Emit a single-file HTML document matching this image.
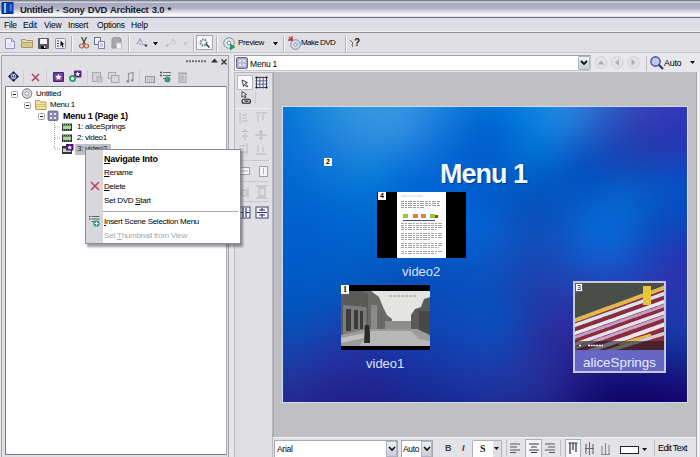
<!DOCTYPE html>
<html><head><meta charset="utf-8">
<style>
*{margin:0;padding:0;box-sizing:border-box}
html,body{width:700px;height:457px;overflow:hidden;background:#dedde0;font-family:"Liberation Sans",sans-serif;font-size:11px;color:#000;position:relative}
.a{position:absolute}
svg{display:block}
#title{left:0;top:0;width:700px;height:17px;background:linear-gradient(#70707e 0,#8a8a9a 1px,#e8e8f0 2px,#a8a8c0 3.5px,#b0b0c6 8px,#d4d4e0 11px,#f4f4fa 14px,#fafafc 16px,#c0c0c8 17px)}
#title .t{left:20px;top:4px;font-weight:bold;font-size:9.5px;letter-spacing:-0.3px;word-spacing:1px;color:#1c1c28;white-space:nowrap}
#menu{left:0;top:17px;width:700px;height:16px;background:#dddfe8;border-top:1px solid #6c6c7c;border-bottom:1px solid #909098;box-shadow:inset 0 -1px 0 #f4f4f8}
#menu span{position:absolute;top:2px;font-size:8.5px;letter-spacing:-0.2px;white-space:nowrap}
#tb{left:0;top:33px;width:700px;height:20px;background:#e0dfe4;border-bottom:1px solid #c4c4cc}
.tbt{font-size:8px;white-space:nowrap;color:#000}
.sep{position:absolute;width:2px;background:#b6b6b8;border-right:1px solid #f6f6f6}
#lp{left:0;top:53px;width:230px;height:404px;background:#e0dfe3;border-left:1px solid #a0a0a0;border-right:1px solid #a8a8ac}
#tree{left:5px;top:86px;width:222px;height:369px;background:#fff;border:1px solid #7a7a80;border-right-color:#a8a8b0}
#rp{left:234px;top:53px;width:466px;height:404px;background:#e0dfe3;border-left:1px solid #a8a8ac}
#canvas{left:272px;top:72px;width:425px;height:365px;background:#c0bfc3}
#blue{left:283px;top:107px;width:404px;height:295px;overflow:hidden;background:#1c38b8}
#pal{left:235px;top:72px;width:37px;height:385px;background:#e1e0e4;border-right:1px solid #c4c4c8}
#btb{left:272px;top:437px;width:428px;height:20px;background:#dfdee2}
.tt{font-size:8px;letter-spacing:-0.28px;white-space:nowrap;color:#000}
.cm{font-size:8px;letter-spacing:-0.27px;white-space:nowrap;color:#000}
.cm u{text-decoration:underline;text-underline-offset:0.5px;text-decoration-thickness:1px}
.vt{font-size:13px;color:#d8e6ff;white-space:nowrap;line-height:15px}
</style></head><body>
<div id="title" class="a">
  <svg class="a" style="left:1px;top:2px" width="13" height="12"><rect x="0.5" y="0" width="12" height="12" fill="#0a2c90"/><rect x="1" y="1" width="2" height="10" fill="#0838a8"/><rect x="3" y="1" width="2.2" height="10" fill="#88c8ff"/><rect x="6" y="1" width="6" height="10" fill="#0a3cb0"/><rect x="8.5" y="2" width="2.5" height="7" fill="#2a78e0"/></svg>
  <div class="a t">Untitled - Sony DVD Architect 3.0 *</div>
</div>
<div id="menu" class="a">
  <span style="left:4px">File</span><span style="left:23px">Edit</span><span style="left:44px">View</span><span style="left:68px">Insert</span><span style="left:97px">Options</span><span style="left:131px">Help</span>
</div>
<div id="tb" class="a">
  <!-- new -->
  <svg class="a" style="left:5px;top:5px" width="10" height="11"><path d="M0.5 0.5h6l3 3v7h-9z" fill="#eef0ff" stroke="#9090c8"/><path d="M6.5 0.5v3h3" fill="#c8c8f0" stroke="#9090c8"/><rect x="2" y="5" width="5" height="4" fill="#dde0fa"/></svg>
  <!-- open -->
  <svg class="a" style="left:21px;top:5px" width="12" height="10"><path d="M0.5 1.5h4l1 1h6v7h-11z" fill="#e4d8a8" stroke="#a89860"/><path d="M0.5 4.5h11" stroke="#b8a870"/><rect x="1" y="5" width="10" height="4" fill="#d8c890"/></svg>
  <!-- save -->
  <svg class="a" style="left:38px;top:5px" width="11" height="11"><rect x="0" y="0" width="11" height="11" rx="1" fill="#5c5c60"/><rect x="2" y="1" width="7" height="5" fill="#f4f4f4"/><rect x="3" y="8" width="5" height="3" fill="#101010"/><rect x="6" y="8" width="1.5" height="2" fill="#e8e8e8"/></svg>
  <!-- properties -->
  <svg class="a" style="left:55px;top:5px" width="11" height="11"><rect x="0.5" y="0.5" width="10" height="10" rx="1" fill="#eef0fa" stroke="#8c8cb8"/><path d="M2 3h2M2 5.5h2M2 8h2" stroke="#404060"/><path d="M5.5 2.5l4 4h-2l1 2.5-1 .5-1-2.5-1 1.5z" fill="#101018"/></svg>
  <div class="sep" style="left:71px;top:3px;height:16px"></div>
  <!-- cut -->
  <svg class="a" style="left:79px;top:4px" width="10" height="12"><path d="M2.5 0l3.5 7M7.5 0l-3.5 7" stroke="#404848" stroke-width="1.3"/><circle cx="2.5" cy="9" r="2" fill="none" stroke="#b06040" stroke-width="1.2"/><circle cx="7.5" cy="9" r="2" fill="none" stroke="#b06040" stroke-width="1.2"/></svg>
  <!-- copy -->
  <svg class="a" style="left:94px;top:4px" width="11" height="12"><rect x="0.5" y="0.5" width="6" height="7" fill="#f0f0f4" stroke="#707080"/><rect x="4.5" y="4.5" width="6" height="7" fill="#f4f4ff" stroke="#8080b0"/><path d="M6 7h3M6 9h3" stroke="#a0a0c0"/></svg>
  <!-- paste -->
  <svg class="a" style="left:111px;top:4px" width="11" height="12"><path d="M1 3q0-3 4.5-3t4.5 3v8h-9z" fill="#a8a8aa" stroke="#909092"/><rect x="5.5" y="6" width="5" height="6" fill="#f4f4f4" stroke="#c0c0c0"/></svg>
  <div class="sep" style="left:128px;top:3px;height:16px"></div>
  <!-- undo -->
  <svg class="a" style="left:136px;top:5px" width="12" height="9"><path d="M1 6l3-5 2 3M3 6h5l2 2" fill="none" stroke="#9a9ad8" stroke-width="1.2"/><circle cx="10" cy="7.5" r="1.3" fill="#505060"/></svg>
  <svg class="a" style="left:153px;top:9px" width="5" height="4"><path d="M0 0h5l-2.5 3.5z" fill="#101010"/></svg>
  <svg class="a" style="left:165px;top:5px" width="12" height="9"><path d="M11 6l-3-5-2 3M9 6h-5l-2 2" fill="none" stroke="#c8c8cc" stroke-width="1.2"/><circle cx="2" cy="7.5" r="1.3" fill="#c0c0c0"/></svg>
  <svg class="a" style="left:183px;top:9px" width="5" height="4"><path d="M0 0h5l-2.5 3.5z" fill="#c4c4c4"/></svg>
  <div class="sep" style="left:193px;top:3px;height:16px"></div>
  <div class="a" style="left:196px;top:2px;width:17px;height:15px;background:#f6f6f8;border:1px solid #a4a4b4"></div>
  <svg class="a" style="left:199px;top:5px" width="12" height="10"><circle cx="4.5" cy="4.5" r="3" fill="none" stroke="#5a8890" stroke-width="2" stroke-dasharray="1.5 1"/><path d="M7 6l3.5 3.5" stroke="#303838" stroke-width="1.5"/></svg>
  <div class="sep" style="left:216px;top:3px;height:16px"></div>
  <!-- preview -->
  <svg class="a" style="left:223px;top:4px" width="14" height="14"><circle cx="6" cy="6" r="5.3" fill="#dce4ee" stroke="#8090a8"/><circle cx="6" cy="6" r="1.8" fill="#fff" stroke="#8090a8"/><path d="M7 6.5v7l5.5-3.5z" fill="#289858"/></svg>
  <div class="a tbt" style="left:238px;top:5px;letter-spacing:-0.35px">Preview</div>
  <svg class="a" style="left:273px;top:9px" width="5" height="4"><path d="M0 0h5l-2.5 3.5z" fill="#101010"/></svg>
  <div class="sep" style="left:283px;top:3px;height:16px"></div>
  <!-- make dvd -->
  <svg class="a" style="left:288px;top:3px" width="13" height="14"><circle cx="7.5" cy="8.5" r="4.8" fill="#d8dce8" stroke="#7888a0"/><circle cx="7.5" cy="8.5" r="1.5" fill="#fff" stroke="#7888a0"/><path d="M1 1l3 3M0 4h5M4 0v5" stroke="#b83040" stroke-width="1.3"/></svg>
  <div class="a tbt" style="left:301px;top:5px;letter-spacing:-0.55px">Make DVD</div>
  <div class="sep" style="left:345px;top:3px;height:16px"></div>
  <svg class="a" style="left:349px;top:4px" width="12" height="12"><path d="M1 3l3 3-1 2 1 2" fill="none" stroke="#606068"/><text x="5" y="9" font-family="Liberation Sans" font-weight="bold" font-size="10" fill="#202028">?</text></svg>
</div>
<!-- left panel -->
<div class="a" style="left:0;top:53px;width:232px;height:404px;background:#e6e6ea"></div>
<div class="a" style="left:1px;top:55px;width:228px;height:402px;background:#e0dfe4;border:1px solid #a4a4a8;border-bottom:none"></div>
<svg class="a" style="left:186px;top:60px" width="20" height="3"><g fill="#505058"><circle cx="1" cy="1.2" r="1"/><circle cx="4" cy="1.2" r="1"/><circle cx="7" cy="1.2" r="1"/><circle cx="10" cy="1.2" r="1"/><circle cx="13" cy="1.2" r="1"/><circle cx="16" cy="1.2" r="1"/><circle cx="19" cy="1.2" r="1"/></g></svg>
<svg class="a" style="left:211px;top:58px" width="7" height="5"><path d="M0 4.5h7L3.5 0.5z" fill="#303038"/></svg>
<svg class="a" style="left:221px;top:59px" width="6" height="6"><path d="M0.5 0.5l5 5M5.5 0.5l-5 5" stroke="#303038" stroke-width="1.4"/></svg>
<!-- panel icons -->
<svg class="a" style="left:8px;top:71px" width="11" height="11"><path d="M5.5 0l2 2h-4zM5.5 11l2-2h-4zM0 5.5l2-2v4zM11 5.5l-2-2v4z" fill="#202850"/><circle cx="5.5" cy="5.5" r="3.8" fill="#303868"/><rect x="3.3" y="3.3" width="4.4" height="4.4" rx="1" fill="#d8e0f8"/><path d="M4.5 4v2.2h2V4" fill="none" stroke="#303868" stroke-width="0.8"/></svg>
<div class="sep" style="left:23px;top:70px;height:14px;width:1px;border:none;background:#cdcdd2"></div>
<svg class="a" style="left:31px;top:73px" width="9" height="9"><path d="M1 1l7 7M8 1l-7 7" stroke="#a85060" stroke-width="1.7"/></svg>
<div class="sep" style="left:46px;top:70px;height:14px;width:1px;border:none;background:#cdcdd2"></div>
<svg class="a" style="left:53px;top:72px" width="11" height="10"><rect x="0" y="0" width="11" height="10" rx="1" fill="#4a2070"/><rect x="1.2" y="1.2" width="8.6" height="7.6" fill="#7848a8"/><path d="M5.5 1.8l1 2.2 2.3.2-1.8 1.5.6 2.3-2.1-1.3-2.1 1.3.6-2.3-1.8-1.5 2.3-.2z" fill="#fff"/></svg>
<svg class="a" style="left:69px;top:70px" width="13" height="12"><rect x="5" y="0.5" width="7.5" height="7" rx="1" fill="#5a2880"/><path d="M8.7 1.6l.8 1.6 1.7.1-1.3 1.1.4 1.7-1.6-.9-1.6.9.4-1.7-1.3-1.1 1.7-.1z" fill="#fff"/><circle cx="3.5" cy="8.5" r="2.6" fill="none" stroke="#2a9a70" stroke-width="1.8"/></svg>
<div class="sep" style="left:87px;top:70px;height:14px;width:1px;border:none;background:#cdcdd2"></div>
<svg class="a" style="left:92px;top:72px" width="11" height="11"><rect x="0.5" y="0.5" width="8" height="9" fill="#d4d4d8" stroke="#a8a8ac"/><path d="M5 5h5v5h-5z" fill="#c8c8cc" stroke="#b0b0b4"/></svg>
<svg class="a" style="left:108px;top:72px" width="12" height="11"><rect x="0.5" y="0.5" width="7" height="6" fill="#dcdce0" stroke="#a8a8ac"/><rect x="3.5" y="3.5" width="7.5" height="7" fill="#d8d8dc" stroke="#a8a8ac"/></svg>
<svg class="a" style="left:126px;top:72px" width="8" height="11"><path d="M2.5 9V1.5l4.5-1v7" fill="none" stroke="#98989c" stroke-width="1.2"/><circle cx="1.8" cy="9.2" r="1.5" fill="#98989c"/><circle cx="6.2" cy="8.2" r="1.5" fill="#98989c"/></svg>
<div class="sep" style="left:139px;top:70px;height:14px;width:1px;border:none;background:#cdcdd2"></div>
<svg class="a" style="left:145px;top:74px" width="10" height="9"><rect x="0.5" y="2.5" width="9" height="6" fill="#c4c4c8" stroke="#98989c"/><path d="M1 4h8M1 7h8" stroke="#e8e8ea" stroke-dasharray="1 1"/></svg>
<svg class="a" style="left:160px;top:71px" width="12" height="12"><path d="M3 1.5h8M3 4.5h8M3 7.5h3" stroke="#707078" stroke-width="1.2"/><circle cx="1" cy="1.5" r="1" fill="#505058"/><circle cx="1" cy="4.5" r="1" fill="#505058"/><circle cx="7.5" cy="8.5" r="3" fill="#3a9880"/></svg>
<svg class="a" style="left:178px;top:72px" width="9" height="11"><path d="M1 1.5h7v9h-7z" fill="#d0d0d4" stroke="#a8a8ac"/><path d="M3 3v6M5 3v6" stroke="#a8a8ac"/><path d="M0 1h9" stroke="#a0a0a4"/></svg>
<!-- tree -->
<div id="tree" class="a"></div>
<!-- tree content -->
<svg class="a" style="left:5px;top:86px" width="222" height="70">
  <g stroke="#a8a8a8" stroke-dasharray="1 1" fill="none">
    <path d="M49.5 35v28M50 41h6M50 52h6M50 63h6"/>
  </g>
  <g fill="#fafafa" stroke="#a0a0a8"><rect x="6.5" y="5.5" width="6" height="6" rx="1"/><rect x="19.5" y="16.5" width="6" height="6" rx="1"/><rect x="33.5" y="27.5" width="6" height="6" rx="1"/></g>
  <path d="M8 8.5h3M21 19.5h3M35 30.5h3" stroke="#202020"/>
  <!-- disc -->
  <circle cx="22" cy="7.5" r="4.8" fill="#d8d8e0" stroke="#7c7c88"/><circle cx="22" cy="7.5" r="1.8" fill="#fff" stroke="#8c8c98" stroke-width="0.8"/>
  <!-- folder -->
  <path d="M30.5 14.5h4l1 1.5h5.5v7.5h-10.5z" fill="#f0e4a0" stroke="#b0a050"/><path d="M31 18.5h10M31 20.5h10" stroke="#c8b868" stroke-width="0.8"/>
  <!-- menu icon -->
  <rect x="43" y="25" width="10" height="9.5" rx="1.2" fill="#8a88b0" stroke="#606078" stroke-width="0.8"/><g fill="#e4e4f4"><rect x="45" y="27" width="2" height="2"/><rect x="49" y="27" width="2" height="2"/><rect x="45" y="31" width="2" height="2"/><rect x="49" y="31" width="2" height="2"/></g>
  <!-- films -->
  <g><rect x="57" y="37.5" width="10" height="7.5" fill="#2c3c2c"/><rect x="58" y="39.5" width="8" height="3.5" fill="#a8d8a0"/><path d="M58 38.3h8M58 44.2h8" stroke="#d0e8d0" stroke-width="0.7" stroke-dasharray="1 1"/></g>
  <g transform="translate(0,11)"><rect x="57" y="37.5" width="10" height="7.5" fill="#2c3c2c"/><rect x="58" y="39.5" width="8" height="3.5" fill="#a8d8a0"/><path d="M58 38.3h8M58 44.2h8" stroke="#d0e8d0" stroke-width="0.7" stroke-dasharray="1 1"/></g>
  <g transform="translate(0,23)"><rect x="57" y="37" width="10" height="8" fill="#2c3c2c"/><rect x="58" y="39.5" width="8" height="3.5" fill="#c8d8c0"/></g>
  <rect x="61" y="58" width="7.5" height="6.5" fill="#4a1870"/><path d="M64.7 59.2l.8 1.5 1.6.1-1.2 1 .4 1.6-1.6-.9-1.6.9.4-1.6-1.2-1 1.6-.1z" fill="#fff"/>
</svg>
<div class="a tt" style="left:36px;top:89px">Untitled</div>
<div class="a tt" style="left:50px;top:100px">Menu 1</div>
<div class="a tt" style="left:63px;top:111px;font-weight:bold;font-size:9px;letter-spacing:-0.26px">Menu 1 (Page 1)</div>
<div class="a tt" style="left:77px;top:122px">1: aliceSprings</div>
<div class="a tt" style="left:77px;top:133px">2: video1</div>
<div class="a" style="left:75px;top:144px;width:36px;height:11px;background:#c0c0c4"></div>
<div class="a tt" style="left:77px;top:144px;color:#202020">3: video2</div>
<!-- right panel -->
<div class="a" style="left:232px;top:53px;width:468px;height:404px;background:#e8e8ec"></div>
<!-- combobox -->
<div class="a" style="left:234px;top:55px;width:357px;height:16px;background:#fff;border:1px solid #7f9db9;border-color:#a0a0a8 #c8c8cc #c8c8cc #a0a0a8"></div>
<svg class="a" style="left:236px;top:57px" width="12" height="12"><rect x="0.5" y="0.5" width="11" height="11" rx="1.5" fill="#a8a8c8" stroke="#68688a"/><rect x="2" y="2" width="8" height="8" fill="#bcbcd8"/><g fill="#e8e8f8"><rect x="3" y="3" width="2" height="2"/><rect x="7" y="3" width="2" height="2"/><rect x="3" y="7" width="2" height="2"/><rect x="7" y="7" width="2" height="2"/></g></svg>
<div class="a tt" style="left:250px;top:59px;font-size:8.5px;letter-spacing:-0.2px">Menu 1</div>
<div class="a" style="left:578px;top:56px;width:12px;height:14px;background:linear-gradient(#eef0f6,#c8ccd8);border:1px solid #b0b4c4;border-radius:1px"></div>
<svg class="a" style="left:580px;top:60px" width="8" height="6"><path d="M1 1l3 3 3-3" fill="none" stroke="#101010" stroke-width="1.8"/></svg>
<!-- nav buttons -->
<svg class="a" style="left:594px;top:56px" width="46" height="14"><g fill="#e4e4e8" stroke="#d0d0d4"><circle cx="7" cy="6.5" r="5.8"/><circle cx="23" cy="6.5" r="5.8"/><circle cx="39.5" cy="6.5" r="5.8"/></g><g fill="#b0b0b4"><path d="M3.5 8.5h7l-3.5-4z"/><path d="M25 3v7l-4-3.5z"/><path d="M37.5 3v7l4-3.5z"/></g></svg>
<div class="a" style="left:646px;top:56px;width:1px;height:15px;background:#c0c0c4"></div>
<svg class="a" style="left:650px;top:56px" width="14" height="14"><circle cx="5.5" cy="5.5" r="4.6" fill="#c0c8f0" stroke="#5860a0" stroke-width="1.6"/><path d="M8.8 8.8l4.2 4.2" stroke="#30386a" stroke-width="2.2"/></svg>
<div class="a tt" style="left:664px;top:58px;font-size:9px;letter-spacing:-0.3px">Auto</div>
<svg class="a" style="left:690px;top:61px" width="5" height="4"><path d="M0 0h5l-2.5 3z" fill="#101010"/></svg>
<!-- palette -->
<div class="a" style="left:234px;top:72px;width:39px;height:385px;background:#e0dfe4;border:1px solid #b8b8bc;border-bottom:none"></div>
<div class="a" style="left:237px;top:75px;width:16px;height:15px;background:#fafafa;border:1px solid #b8b8bc"></div>
<svg class="a" style="left:241px;top:79px" width="9" height="9"><path d="M1 1l5.5 2.6-2.3.7 2.6 2.9-.9.9-2.6-2.9-.8 2.2z" fill="#f0f0f8" stroke="#202028" stroke-width="0.8"/></svg>
<svg class="a" style="left:255px;top:76px" width="13" height="13"><rect x="1.5" y="1.5" width="10" height="10" fill="#eeeef6" stroke="#303050" stroke-width="0.9"/><path d="M0.5 4.8h12M0.5 8.2h12M4.8 0.5v12M8.2 0.5v12" stroke="#484870" stroke-width="0.8"/><g fill="#101018"><circle cx="1.5" cy="1.5" r="1.1"/><circle cx="11.5" cy="1.5" r="1.1"/><circle cx="1.5" cy="11.5" r="1.1"/><circle cx="11.5" cy="11.5" r="1.1"/></g></svg>
<svg class="a" style="left:240px;top:91px" width="12" height="13"><path d="M2 0.5l4.5 3-2 .6 1.6 2.2-1 .7-1.6-2.2-1.5 1.5z" fill="#f4f4fa" stroke="#202028" stroke-width="0.8"/><path d="M4 8.2h4.5a2 2 0 0 1 0 4h-4.5a2 2 0 0 1 0-4z" fill="none" stroke="#202028" stroke-width="1.1"/><path d="M4.5 10.2h4" stroke="#202028" stroke-width="1.2"/></svg>
<div class="a" style="left:255px;top:92px;width:1px;height:12px;background:#cacace"></div>
<div class="a" style="left:236px;top:108px;width:33px;height:1px;background:#c4c4c8;border-bottom:1px solid #f4f4f6"></div>
<svg class="a" style="left:238px;top:112px" width="32" height="108">
  <g fill="none" stroke="#b8b8bc" stroke-width="1">
    <!-- row1 -->
    <path d="M2 1v11M4 3h5M4 6h4M4 9h6"/><path d="M18 1h11M20 3v7M25 3v5"/>
    <path d="M7 17v2M4 19.5h6M7 21v2M4 24h6M7 25v3"/><path d="M17 23h12M23 18v10M21 20h4M21 26h4"/>
    <path d="M9 31v11M1 34h6M1 37h5M1 40h7"/><path d="M18 42h11M20 33v7M25 35v5"/>
  </g>
  <path d="M0 48.5h31" stroke="#c8c8cc"/>
  <g fill="#f6f6f8" stroke="#a0a0a4"><rect x="1.5" y="55.5" width="10" height="7"/><rect x="21.5" y="54.5" width="8" height="10"/></g>
  <path d="M3 59h7M25.5 56v6" stroke="#b0b0b4"/>
  <path d="M0 69.5h31" stroke="#c8c8cc"/>
  <g fill="none" stroke="#b4b4b8"><path d="M1 76v10M10 76v10M4 78h4v6h-4z"/><path d="M18 74h11M18 86h11M21 76v8h6v-8z"/></g>
  <path d="M0 89.5h31" stroke="#c8c8cc"/>
  <g fill="#f8f8fc" stroke="#40406a"><rect x="1" y="95" width="11" height="11"/><rect x="18" y="95" width="12" height="11"/></g>
  <g stroke="#303080" stroke-width="1.2"><path d="M5 96v9M8 96v9M2 100.5h2.5M8.5 100.5h3"/><path d="M19 100.5h10M24 96v3M24 102v3M21 98h6M21 103h6"/></g>
</svg>
<!-- canvas -->
<div class="a" style="left:273px;top:72px;width:423px;height:365px;background:#c0bfc4;border-left:1px solid #a8a8ac"></div>
<div class="a" style="left:696px;top:72px;width:4px;height:385px;background:#f2f2f4;border-left:1px solid #a4a4a8"></div>

<!-- bottom toolbar -->
<div class="a" style="left:273px;top:437px;width:423px;height:20px;background:#e4e3e8;border-top:1px solid #f0f0f2"></div>
<div class="a" style="left:274px;top:440px;width:124px;height:17px;background:#fff;border:1px solid #a8a8b0;border-bottom:none"></div>
<div class="a tt" style="left:277px;top:444px;font-size:8.5px;letter-spacing:-0.3px">Arial</div>
<div class="a" style="left:386px;top:441px;width:11px;height:16px;background:linear-gradient(#eef0f6,#c8ccd8);border:1px solid #b0b4c4"></div>
<svg class="a" style="left:388px;top:446px" width="8" height="6"><path d="M1 1l3 3 3-3" fill="none" stroke="#101010" stroke-width="1.6"/></svg>
<div class="a" style="left:401px;top:440px;width:32px;height:17px;background:#fff;border:1px solid #a8a8b0;border-bottom:none"></div>
<div class="a tt" style="left:403px;top:444px;font-size:8.5px;letter-spacing:-0.35px">Auto</div>
<div class="a" style="left:421px;top:441px;width:11px;height:16px;background:linear-gradient(#eef0f6,#c8ccd8);border:1px solid #b0b4c4"></div>
<svg class="a" style="left:423px;top:446px" width="8" height="6"><path d="M1 1l3 3 3-3" fill="none" stroke="#101010" stroke-width="1.6"/></svg>
<div class="a" style="left:445px;top:443px;font-weight:bold;font-size:9px;color:#404048">B</div>
<div class="a" style="left:462px;top:443px;font-style:italic;font-weight:bold;font-size:9px;color:#404048">I</div>
<div class="a" style="left:472px;top:440px;width:30px;height:17px;background:#fff;border:1px solid #b0b0b8;border-bottom:none;border-radius:2px 2px 0 0"></div>
<div class="a" style="left:480px;top:443px;font-weight:bold;font-size:10px;color:#202028;font-family:'Liberation Serif',serif">S</div>
<div class="a" style="left:493px;top:441px;width:8px;height:16px;background:#e0e0e0"></div>
<svg class="a" style="left:494px;top:447px" width="5" height="3"><path d="M0 0h5l-2.5 3z" fill="#101010"/></svg>
<div class="a" style="left:506px;top:440px;width:1px;height:16px;background:#c0c0c4"></div>
<svg class="a" style="left:510px;top:443px" width="12" height="10"><path d="M0 1h10M0 4h7M0 7h10M0 9.5h6" stroke="#585860" stroke-width="1.1"/></svg>
<div class="a" style="left:525px;top:439px;width:17px;height:18px;background:#f6f6f8;border:1px solid #a8b0c0;border-bottom:none"></div>
<svg class="a" style="left:529px;top:443px" width="11" height="10"><path d="M0 1h10M2 4h6M0 7h10M2 9.5h6" stroke="#303848" stroke-width="1.1"/></svg>
<svg class="a" style="left:544px;top:443px" width="12" height="10"><path d="M1 1h10M4 4h7M1 7h10M5 9.5h6" stroke="#585860" stroke-width="1.1"/></svg>
<div class="a" style="left:560px;top:440px;width:1px;height:16px;background:#c0c0c4"></div>
<div class="a" style="left:565px;top:439px;width:16px;height:18px;background:#f6f6f8;border:1px solid #a8b0c0;border-bottom:none"></div>
<svg class="a" style="left:568px;top:442px" width="10" height="13"><path d="M0.5 1h9M2 1v11M5 1v7M8 1v9" stroke="#283050" stroke-width="1.2"/></svg>
<svg class="a" style="left:585px;top:442px" width="9" height="13"><path d="M1 2v10M4.5 0v13M8 2v10M0 6.5h9" stroke="#686870" stroke-width="1.1"/></svg>
<svg class="a" style="left:601px;top:442px" width="9" height="13"><path d="M1 4v8M4.5 1v11M8 3v9M0 12.5h9" stroke="#888890" stroke-width="1.1"/></svg>
<div class="a" style="left:620px;top:446px;width:19px;height:8px;background:#fff;border:1px solid #202028"></div>
<svg class="a" style="left:642px;top:448px" width="5" height="3"><path d="M0 0h5l-2.5 3z" fill="#101010"/></svg>
<div class="a" style="left:654px;top:440px;width:1px;height:16px;background:#c0c0c4"></div>
<div class="a tt" style="left:658px;top:443px;font-size:9px;letter-spacing:-0.6px">Edit Text</div>
<div class="a" style="left:282px;top:106px;width:406px;height:297px;border:1px solid #d4dcf4"></div>
<div class="a" style="left:283px;top:107px;width:404px;height:295px;overflow:hidden;background:#0860d0">
<svg class="a" style="left:-12px;top:-12px;filter:blur(6.6000000000000005px)" width="428" height="319" viewBox="-12 -12 428 319"><rect x="-12" y="-12" width="12" height="12" fill="#0679d9"/><rect x="0" y="-12" width="12" height="12" fill="#0a7cd9"/><rect x="12" y="-12" width="12" height="12" fill="#1081da"/><rect x="24" y="-12" width="12" height="12" fill="#1786db"/><rect x="36" y="-12" width="12" height="12" fill="#1e8cdd"/><rect x="48" y="-12" width="12" height="12" fill="#2691de"/><rect x="60" y="-12" width="12" height="12" fill="#2c95e0"/><rect x="72" y="-12" width="12" height="12" fill="#3298e1"/><rect x="84" y="-12" width="12" height="12" fill="#3599e2"/><rect x="96" y="-12" width="12" height="12" fill="#3799e3"/><rect x="108" y="-12" width="12" height="12" fill="#3697e3"/><rect x="120" y="-12" width="12" height="12" fill="#3293e3"/><rect x="132" y="-12" width="12" height="12" fill="#2c8ee2"/><rect x="144" y="-12" width="12" height="12" fill="#2488e0"/><rect x="156" y="-12" width="12" height="12" fill="#1c83dd"/><rect x="168" y="-12" width="12" height="12" fill="#147edb"/><rect x="180" y="-12" width="12" height="12" fill="#0d79d9"/><rect x="192" y="-12" width="12" height="12" fill="#0976d9"/><rect x="204" y="-12" width="12" height="12" fill="#0676da"/><rect x="216" y="-12" width="12" height="12" fill="#0678dc"/><rect x="228" y="-12" width="12" height="12" fill="#0a7dde"/><rect x="240" y="-12" width="12" height="12" fill="#1082e0"/><rect x="252" y="-12" width="12" height="12" fill="#1885e2"/><rect x="264" y="-12" width="12" height="12" fill="#1f87e1"/><rect x="276" y="-12" width="12" height="12" fill="#2684df"/><rect x="288" y="-12" width="12" height="12" fill="#2b7dda"/><rect x="300" y="-12" width="12" height="12" fill="#2e73d4"/><rect x="312" y="-12" width="12" height="12" fill="#3168cd"/><rect x="324" y="-12" width="12" height="12" fill="#335dc6"/><rect x="336" y="-12" width="12" height="12" fill="#3453c1"/><rect x="348" y="-12" width="12" height="12" fill="#354bbd"/><rect x="360" y="-12" width="12" height="12" fill="#3644bb"/><rect x="372" y="-12" width="12" height="12" fill="#363fba"/><rect x="384" y="-12" width="12" height="12" fill="#353cbb"/><rect x="396" y="-12" width="12" height="12" fill="#333abd"/><rect x="408" y="-12" width="12" height="12" fill="#3239bf"/><rect x="-12" y="0" width="12" height="12" fill="#0475d8"/><rect x="0" y="0" width="12" height="12" fill="#0878d8"/><rect x="12" y="0" width="12" height="12" fill="#0e7cd8"/><rect x="24" y="0" width="12" height="12" fill="#1583da"/><rect x="36" y="0" width="12" height="12" fill="#1d89db"/><rect x="48" y="0" width="12" height="12" fill="#248edd"/><rect x="60" y="0" width="12" height="12" fill="#2b92df"/><rect x="72" y="0" width="12" height="12" fill="#3095e0"/><rect x="84" y="0" width="12" height="12" fill="#3496e1"/><rect x="96" y="0" width="12" height="12" fill="#3697e2"/><rect x="108" y="0" width="12" height="12" fill="#3594e2"/><rect x="120" y="0" width="12" height="12" fill="#3090e1"/><rect x="132" y="0" width="12" height="12" fill="#2989e0"/><rect x="144" y="0" width="12" height="12" fill="#2183de"/><rect x="156" y="0" width="12" height="12" fill="#177dda"/><rect x="168" y="0" width="12" height="12" fill="#0f78d7"/><rect x="180" y="0" width="12" height="12" fill="#0872d5"/><rect x="192" y="0" width="12" height="12" fill="#046ed5"/><rect x="204" y="0" width="12" height="12" fill="#016ed6"/><rect x="216" y="0" width="12" height="12" fill="#0171d9"/><rect x="228" y="0" width="12" height="12" fill="#0578dc"/><rect x="240" y="0" width="12" height="12" fill="#0b7ede"/><rect x="252" y="0" width="12" height="12" fill="#1382e0"/><rect x="264" y="0" width="12" height="12" fill="#1b84e0"/><rect x="276" y="0" width="12" height="12" fill="#2282dd"/><rect x="288" y="0" width="12" height="12" fill="#277ad7"/><rect x="300" y="0" width="12" height="12" fill="#2a6ed0"/><rect x="312" y="0" width="12" height="12" fill="#2c62c8"/><rect x="324" y="0" width="12" height="12" fill="#2e57c1"/><rect x="336" y="0" width="12" height="12" fill="#304dbc"/><rect x="348" y="0" width="12" height="12" fill="#3245b8"/><rect x="360" y="0" width="12" height="12" fill="#323fb6"/><rect x="372" y="0" width="12" height="12" fill="#323bb6"/><rect x="384" y="0" width="12" height="12" fill="#3139b7"/><rect x="396" y="0" width="12" height="12" fill="#2f38ba"/><rect x="408" y="0" width="12" height="12" fill="#2e37bd"/><rect x="-12" y="12" width="12" height="12" fill="#0272d7"/><rect x="0" y="12" width="12" height="12" fill="#0775d7"/><rect x="12" y="12" width="12" height="12" fill="#0c79d8"/><rect x="24" y="12" width="12" height="12" fill="#147fd9"/><rect x="36" y="12" width="12" height="12" fill="#1b85db"/><rect x="48" y="12" width="12" height="12" fill="#228adc"/><rect x="60" y="12" width="12" height="12" fill="#298dde"/><rect x="72" y="12" width="12" height="12" fill="#2d90df"/><rect x="84" y="12" width="12" height="12" fill="#3092e0"/><rect x="96" y="12" width="12" height="12" fill="#3293e0"/><rect x="108" y="12" width="12" height="12" fill="#3191e0"/><rect x="120" y="12" width="12" height="12" fill="#2c8be0"/><rect x="132" y="12" width="12" height="12" fill="#2584de"/><rect x="144" y="12" width="12" height="12" fill="#1c7edb"/><rect x="156" y="12" width="12" height="12" fill="#1377d8"/><rect x="168" y="12" width="12" height="12" fill="#0a71d4"/><rect x="180" y="12" width="12" height="12" fill="#046bd2"/><rect x="192" y="12" width="12" height="12" fill="#0166d1"/><rect x="204" y="12" width="12" height="12" fill="#0067d3"/><rect x="216" y="12" width="12" height="12" fill="#006cd6"/><rect x="228" y="12" width="12" height="12" fill="#0173d9"/><rect x="240" y="12" width="12" height="12" fill="#067adc"/><rect x="252" y="12" width="12" height="12" fill="#0e7edd"/><rect x="264" y="12" width="12" height="12" fill="#167fdc"/><rect x="276" y="12" width="12" height="12" fill="#1d7cd9"/><rect x="288" y="12" width="12" height="12" fill="#2173d3"/><rect x="300" y="12" width="12" height="12" fill="#2367cb"/><rect x="312" y="12" width="12" height="12" fill="#265bc4"/><rect x="324" y="12" width="12" height="12" fill="#2851bd"/><rect x="336" y="12" width="12" height="12" fill="#2a48b7"/><rect x="348" y="12" width="12" height="12" fill="#2d41b3"/><rect x="360" y="12" width="12" height="12" fill="#2e3bb1"/><rect x="372" y="12" width="12" height="12" fill="#2f38b2"/><rect x="384" y="12" width="12" height="12" fill="#2d36b4"/><rect x="396" y="12" width="12" height="12" fill="#2b36b8"/><rect x="408" y="12" width="12" height="12" fill="#2a37bb"/><rect x="-12" y="24" width="12" height="12" fill="#0270d7"/><rect x="0" y="24" width="12" height="12" fill="#0672d8"/><rect x="12" y="24" width="12" height="12" fill="#0c76d8"/><rect x="24" y="24" width="12" height="12" fill="#127bd9"/><rect x="36" y="24" width="12" height="12" fill="#1a80da"/><rect x="48" y="24" width="12" height="12" fill="#2084dc"/><rect x="60" y="24" width="12" height="12" fill="#2587dd"/><rect x="72" y="24" width="12" height="12" fill="#288bdd"/><rect x="84" y="24" width="12" height="12" fill="#2a8dde"/><rect x="96" y="24" width="12" height="12" fill="#2b8dde"/><rect x="108" y="24" width="12" height="12" fill="#2a8bde"/><rect x="120" y="24" width="12" height="12" fill="#2585dd"/><rect x="132" y="24" width="12" height="12" fill="#1e7edc"/><rect x="144" y="24" width="12" height="12" fill="#1678d9"/><rect x="156" y="24" width="12" height="12" fill="#0e71d6"/><rect x="168" y="24" width="12" height="12" fill="#086bd3"/><rect x="180" y="24" width="12" height="12" fill="#0365d0"/><rect x="192" y="24" width="12" height="12" fill="#0061cf"/><rect x="204" y="24" width="12" height="12" fill="#0062d0"/><rect x="216" y="24" width="12" height="12" fill="#0068d3"/><rect x="228" y="24" width="12" height="12" fill="#006fd6"/><rect x="240" y="24" width="12" height="12" fill="#0275d9"/><rect x="252" y="24" width="12" height="12" fill="#0878d9"/><rect x="264" y="24" width="12" height="12" fill="#0f77d7"/><rect x="276" y="24" width="12" height="12" fill="#1572d3"/><rect x="288" y="24" width="12" height="12" fill="#1969cd"/><rect x="300" y="24" width="12" height="12" fill="#1c5ec6"/><rect x="312" y="24" width="12" height="12" fill="#1e54bf"/><rect x="324" y="24" width="12" height="12" fill="#214bb9"/><rect x="336" y="24" width="12" height="12" fill="#2443b4"/><rect x="348" y="24" width="12" height="12" fill="#273eb0"/><rect x="360" y="24" width="12" height="12" fill="#293aaf"/><rect x="372" y="24" width="12" height="12" fill="#2b37af"/><rect x="384" y="24" width="12" height="12" fill="#2936b2"/><rect x="396" y="24" width="12" height="12" fill="#2637b7"/><rect x="408" y="24" width="12" height="12" fill="#2438bb"/><rect x="-12" y="36" width="12" height="12" fill="#026ed7"/><rect x="0" y="36" width="12" height="12" fill="#0670d8"/><rect x="12" y="36" width="12" height="12" fill="#0b73d8"/><rect x="24" y="36" width="12" height="12" fill="#1177d9"/><rect x="36" y="36" width="12" height="12" fill="#177ada"/><rect x="48" y="36" width="12" height="12" fill="#1c7ddb"/><rect x="60" y="36" width="12" height="12" fill="#1f81db"/><rect x="72" y="36" width="12" height="12" fill="#2086db"/><rect x="84" y="36" width="12" height="12" fill="#2087dc"/><rect x="96" y="36" width="12" height="12" fill="#2086dc"/><rect x="108" y="36" width="12" height="12" fill="#1e82dc"/><rect x="120" y="36" width="12" height="12" fill="#1a7ddb"/><rect x="132" y="36" width="12" height="12" fill="#1577da"/><rect x="144" y="36" width="12" height="12" fill="#1072d7"/><rect x="156" y="36" width="12" height="12" fill="#0a6cd5"/><rect x="168" y="36" width="12" height="12" fill="#0566d2"/><rect x="180" y="36" width="12" height="12" fill="#0162cf"/><rect x="192" y="36" width="12" height="12" fill="#005fce"/><rect x="204" y="36" width="12" height="12" fill="#0060cf"/><rect x="216" y="36" width="12" height="12" fill="#0065d1"/><rect x="228" y="36" width="12" height="12" fill="#006bd3"/><rect x="240" y="36" width="12" height="12" fill="#0071d5"/><rect x="252" y="36" width="12" height="12" fill="#0372d4"/><rect x="264" y="36" width="12" height="12" fill="#096ed2"/><rect x="276" y="36" width="12" height="12" fill="#0d67cd"/><rect x="288" y="36" width="12" height="12" fill="#105ec7"/><rect x="300" y="36" width="12" height="12" fill="#1456c2"/><rect x="312" y="36" width="12" height="12" fill="#174ebc"/><rect x="324" y="36" width="12" height="12" fill="#1a48b7"/><rect x="336" y="36" width="12" height="12" fill="#1d42b3"/><rect x="348" y="36" width="12" height="12" fill="#1f3fb1"/><rect x="360" y="36" width="12" height="12" fill="#223cb0"/><rect x="372" y="36" width="12" height="12" fill="#233ab1"/><rect x="384" y="36" width="12" height="12" fill="#223ab5"/><rect x="396" y="36" width="12" height="12" fill="#203bb9"/><rect x="408" y="36" width="12" height="12" fill="#1e3bbd"/><rect x="-12" y="48" width="12" height="12" fill="#016cd6"/><rect x="0" y="48" width="12" height="12" fill="#056ed6"/><rect x="12" y="48" width="12" height="12" fill="#0970d7"/><rect x="24" y="48" width="12" height="12" fill="#0e73d7"/><rect x="36" y="48" width="12" height="12" fill="#1276d8"/><rect x="48" y="48" width="12" height="12" fill="#1579d9"/><rect x="60" y="48" width="12" height="12" fill="#167ed9"/><rect x="72" y="48" width="12" height="12" fill="#1682d9"/><rect x="84" y="48" width="12" height="12" fill="#1582d9"/><rect x="96" y="48" width="12" height="12" fill="#147fda"/><rect x="108" y="48" width="12" height="12" fill="#127ada"/><rect x="120" y="48" width="12" height="12" fill="#1075d9"/><rect x="132" y="48" width="12" height="12" fill="#0d70d8"/><rect x="144" y="48" width="12" height="12" fill="#096cd6"/><rect x="156" y="48" width="12" height="12" fill="#0668d4"/><rect x="168" y="48" width="12" height="12" fill="#0263d2"/><rect x="180" y="48" width="12" height="12" fill="#0060cf"/><rect x="192" y="48" width="12" height="12" fill="#005ece"/><rect x="204" y="48" width="12" height="12" fill="#005fce"/><rect x="216" y="48" width="12" height="12" fill="#0062ce"/><rect x="228" y="48" width="12" height="12" fill="#0066cf"/><rect x="240" y="48" width="12" height="12" fill="#0069cf"/><rect x="252" y="48" width="12" height="12" fill="#0169ce"/><rect x="264" y="48" width="12" height="12" fill="#0465cc"/><rect x="276" y="48" width="12" height="12" fill="#075ec8"/><rect x="288" y="48" width="12" height="12" fill="#0a55c3"/><rect x="300" y="48" width="12" height="12" fill="#0c50bf"/><rect x="312" y="48" width="12" height="12" fill="#0f4cbb"/><rect x="324" y="48" width="12" height="12" fill="#1249b8"/><rect x="336" y="48" width="12" height="12" fill="#1547b6"/><rect x="348" y="48" width="12" height="12" fill="#1745b5"/><rect x="360" y="48" width="12" height="12" fill="#1943b5"/><rect x="372" y="48" width="12" height="12" fill="#1942b7"/><rect x="384" y="48" width="12" height="12" fill="#1842bb"/><rect x="396" y="48" width="12" height="12" fill="#1741be"/><rect x="408" y="48" width="12" height="12" fill="#1740c1"/><rect x="-12" y="60" width="12" height="12" fill="#0069d4"/><rect x="0" y="60" width="12" height="12" fill="#036bd4"/><rect x="12" y="60" width="12" height="12" fill="#066dd5"/><rect x="24" y="60" width="12" height="12" fill="#0a70d5"/><rect x="36" y="60" width="12" height="12" fill="#0d73d6"/><rect x="48" y="60" width="12" height="12" fill="#0e76d7"/><rect x="60" y="60" width="12" height="12" fill="#0e7ad7"/><rect x="72" y="60" width="12" height="12" fill="#0c7dd7"/><rect x="84" y="60" width="12" height="12" fill="#0b7cd7"/><rect x="96" y="60" width="12" height="12" fill="#0a78d7"/><rect x="108" y="60" width="12" height="12" fill="#0972d8"/><rect x="120" y="60" width="12" height="12" fill="#076ed7"/><rect x="132" y="60" width="12" height="12" fill="#066ad6"/><rect x="144" y="60" width="12" height="12" fill="#0467d5"/><rect x="156" y="60" width="12" height="12" fill="#0264d3"/><rect x="168" y="60" width="12" height="12" fill="#0162d2"/><rect x="180" y="60" width="12" height="12" fill="#005fd0"/><rect x="192" y="60" width="12" height="12" fill="#005ece"/><rect x="204" y="60" width="12" height="12" fill="#005ecc"/><rect x="216" y="60" width="12" height="12" fill="#005fcb"/><rect x="228" y="60" width="12" height="12" fill="#0060ca"/><rect x="240" y="60" width="12" height="12" fill="#0061c9"/><rect x="252" y="60" width="12" height="12" fill="#0160c8"/><rect x="264" y="60" width="12" height="12" fill="#025dc6"/><rect x="276" y="60" width="12" height="12" fill="#0457c4"/><rect x="288" y="60" width="12" height="12" fill="#0552c1"/><rect x="300" y="60" width="12" height="12" fill="#074fbf"/><rect x="312" y="60" width="12" height="12" fill="#0a4fbe"/><rect x="324" y="60" width="12" height="12" fill="#0c50bd"/><rect x="336" y="60" width="12" height="12" fill="#0f4fbc"/><rect x="348" y="60" width="12" height="12" fill="#104ebb"/><rect x="360" y="60" width="12" height="12" fill="#104cbc"/><rect x="372" y="60" width="12" height="12" fill="#104bbe"/><rect x="384" y="60" width="12" height="12" fill="#0f4ac2"/><rect x="396" y="60" width="12" height="12" fill="#0f48c4"/><rect x="408" y="60" width="12" height="12" fill="#1045c4"/><rect x="-12" y="72" width="12" height="12" fill="#0067d1"/><rect x="0" y="72" width="12" height="12" fill="#0168d2"/><rect x="12" y="72" width="12" height="12" fill="#036ad2"/><rect x="24" y="72" width="12" height="12" fill="#066cd3"/><rect x="36" y="72" width="12" height="12" fill="#086fd4"/><rect x="48" y="72" width="12" height="12" fill="#0972d5"/><rect x="60" y="72" width="12" height="12" fill="#0875d5"/><rect x="72" y="72" width="12" height="12" fill="#0676d5"/><rect x="84" y="72" width="12" height="12" fill="#0575d5"/><rect x="96" y="72" width="12" height="12" fill="#0472d5"/><rect x="108" y="72" width="12" height="12" fill="#026dd6"/><rect x="120" y="72" width="12" height="12" fill="#0169d6"/><rect x="132" y="72" width="12" height="12" fill="#0167d5"/><rect x="144" y="72" width="12" height="12" fill="#0164d4"/><rect x="156" y="72" width="12" height="12" fill="#0062d3"/><rect x="168" y="72" width="12" height="12" fill="#0061d2"/><rect x="180" y="72" width="12" height="12" fill="#005fd0"/><rect x="192" y="72" width="12" height="12" fill="#005ece"/><rect x="204" y="72" width="12" height="12" fill="#005ccb"/><rect x="216" y="72" width="12" height="12" fill="#005cc8"/><rect x="228" y="72" width="12" height="12" fill="#015bc5"/><rect x="240" y="72" width="12" height="12" fill="#025ac3"/><rect x="252" y="72" width="12" height="12" fill="#0259c2"/><rect x="264" y="72" width="12" height="12" fill="#0357c2"/><rect x="276" y="72" width="12" height="12" fill="#0355c2"/><rect x="288" y="72" width="12" height="12" fill="#0453c2"/><rect x="300" y="72" width="12" height="12" fill="#0554c3"/><rect x="312" y="72" width="12" height="12" fill="#0656c3"/><rect x="324" y="72" width="12" height="12" fill="#0859c3"/><rect x="336" y="72" width="12" height="12" fill="#0a59c3"/><rect x="348" y="72" width="12" height="12" fill="#0a57c2"/><rect x="360" y="72" width="12" height="12" fill="#0a54c2"/><rect x="372" y="72" width="12" height="12" fill="#0952c4"/><rect x="384" y="72" width="12" height="12" fill="#0850c7"/><rect x="396" y="72" width="12" height="12" fill="#094dc8"/><rect x="408" y="72" width="12" height="12" fill="#0c48c7"/><rect x="-12" y="84" width="12" height="12" fill="#0064cf"/><rect x="0" y="84" width="12" height="12" fill="#0065cf"/><rect x="12" y="84" width="12" height="12" fill="#0166d0"/><rect x="24" y="84" width="12" height="12" fill="#0368d2"/><rect x="36" y="84" width="12" height="12" fill="#046bd3"/><rect x="48" y="84" width="12" height="12" fill="#046dd3"/><rect x="60" y="84" width="12" height="12" fill="#046fd3"/><rect x="72" y="84" width="12" height="12" fill="#0270d3"/><rect x="84" y="84" width="12" height="12" fill="#016fd3"/><rect x="96" y="84" width="12" height="12" fill="#006dd3"/><rect x="108" y="84" width="12" height="12" fill="#0069d4"/><rect x="120" y="84" width="12" height="12" fill="#0066d4"/><rect x="132" y="84" width="12" height="12" fill="#0064d4"/><rect x="144" y="84" width="12" height="12" fill="#0063d3"/><rect x="156" y="84" width="12" height="12" fill="#0061d3"/><rect x="168" y="84" width="12" height="12" fill="#0060d2"/><rect x="180" y="84" width="12" height="12" fill="#005fd1"/><rect x="192" y="84" width="12" height="12" fill="#005ece"/><rect x="204" y="84" width="12" height="12" fill="#015ccb"/><rect x="216" y="84" width="12" height="12" fill="#0359c6"/><rect x="228" y="84" width="12" height="12" fill="#0456c1"/><rect x="240" y="84" width="12" height="12" fill="#0554be"/><rect x="252" y="84" width="12" height="12" fill="#0554be"/><rect x="264" y="84" width="12" height="12" fill="#0554c0"/><rect x="276" y="84" width="12" height="12" fill="#0455c2"/><rect x="288" y="84" width="12" height="12" fill="#0457c5"/><rect x="300" y="84" width="12" height="12" fill="#045ac8"/><rect x="312" y="84" width="12" height="12" fill="#055eca"/><rect x="324" y="84" width="12" height="12" fill="#0661ca"/><rect x="336" y="84" width="12" height="12" fill="#0761c9"/><rect x="348" y="84" width="12" height="12" fill="#075dc7"/><rect x="360" y="84" width="12" height="12" fill="#0658c5"/><rect x="372" y="84" width="12" height="12" fill="#0654c5"/><rect x="384" y="84" width="12" height="12" fill="#0651c7"/><rect x="396" y="84" width="12" height="12" fill="#074dc7"/><rect x="408" y="84" width="12" height="12" fill="#0b49c6"/><rect x="-12" y="96" width="12" height="12" fill="#0062ce"/><rect x="0" y="96" width="12" height="12" fill="#0062ce"/><rect x="12" y="96" width="12" height="12" fill="#0063cf"/><rect x="24" y="96" width="12" height="12" fill="#0165d1"/><rect x="36" y="96" width="12" height="12" fill="#0266d2"/><rect x="48" y="96" width="12" height="12" fill="#0269d2"/><rect x="60" y="96" width="12" height="12" fill="#016bd2"/><rect x="72" y="96" width="12" height="12" fill="#006bd2"/><rect x="84" y="96" width="12" height="12" fill="#006bd1"/><rect x="96" y="96" width="12" height="12" fill="#0069d1"/><rect x="108" y="96" width="12" height="12" fill="#0066d1"/><rect x="120" y="96" width="12" height="12" fill="#0064d2"/><rect x="132" y="96" width="12" height="12" fill="#0062d2"/><rect x="144" y="96" width="12" height="12" fill="#0061d2"/><rect x="156" y="96" width="12" height="12" fill="#0061d2"/><rect x="168" y="96" width="12" height="12" fill="#0060d2"/><rect x="180" y="96" width="12" height="12" fill="#0160d2"/><rect x="192" y="96" width="12" height="12" fill="#025fcf"/><rect x="204" y="96" width="12" height="12" fill="#045ccb"/><rect x="216" y="96" width="12" height="12" fill="#0658c6"/><rect x="228" y="96" width="12" height="12" fill="#0754c0"/><rect x="240" y="96" width="12" height="12" fill="#0851bb"/><rect x="252" y="96" width="12" height="12" fill="#0851bc"/><rect x="264" y="96" width="12" height="12" fill="#0753bf"/><rect x="276" y="96" width="12" height="12" fill="#0656c3"/><rect x="288" y="96" width="12" height="12" fill="#055bc8"/><rect x="300" y="96" width="12" height="12" fill="#055fcd"/><rect x="312" y="96" width="12" height="12" fill="#0563d0"/><rect x="324" y="96" width="12" height="12" fill="#0565d0"/><rect x="336" y="96" width="12" height="12" fill="#0664cd"/><rect x="348" y="96" width="12" height="12" fill="#065ec9"/><rect x="360" y="96" width="12" height="12" fill="#0658c5"/><rect x="372" y="96" width="12" height="12" fill="#0653c4"/><rect x="384" y="96" width="12" height="12" fill="#084fc4"/><rect x="396" y="96" width="12" height="12" fill="#0a4bc4"/><rect x="408" y="96" width="12" height="12" fill="#0d47c4"/><rect x="-12" y="108" width="12" height="12" fill="#0060cd"/><rect x="0" y="108" width="12" height="12" fill="#0060ce"/><rect x="12" y="108" width="12" height="12" fill="#0061cf"/><rect x="24" y="108" width="12" height="12" fill="#0061d0"/><rect x="36" y="108" width="12" height="12" fill="#0063d1"/><rect x="48" y="108" width="12" height="12" fill="#0065d1"/><rect x="60" y="108" width="12" height="12" fill="#0066d0"/><rect x="72" y="108" width="12" height="12" fill="#0067cf"/><rect x="84" y="108" width="12" height="12" fill="#0067cf"/><rect x="96" y="108" width="12" height="12" fill="#0065cf"/><rect x="108" y="108" width="12" height="12" fill="#0063cf"/><rect x="120" y="108" width="12" height="12" fill="#0061cf"/><rect x="132" y="108" width="12" height="12" fill="#0060d0"/><rect x="144" y="108" width="12" height="12" fill="#0060d0"/><rect x="156" y="108" width="12" height="12" fill="#0060d1"/><rect x="168" y="108" width="12" height="12" fill="#0160d2"/><rect x="180" y="108" width="12" height="12" fill="#0361d2"/><rect x="192" y="108" width="12" height="12" fill="#0460d1"/><rect x="204" y="108" width="12" height="12" fill="#065dcc"/><rect x="216" y="108" width="12" height="12" fill="#0858c6"/><rect x="228" y="108" width="12" height="12" fill="#0a54c0"/><rect x="240" y="108" width="12" height="12" fill="#0b51bc"/><rect x="252" y="108" width="12" height="12" fill="#0c50bc"/><rect x="264" y="108" width="12" height="12" fill="#0b53bf"/><rect x="276" y="108" width="12" height="12" fill="#0957c4"/><rect x="288" y="108" width="12" height="12" fill="#085dcb"/><rect x="300" y="108" width="12" height="12" fill="#0763d1"/><rect x="312" y="108" width="12" height="12" fill="#0667d5"/><rect x="324" y="108" width="12" height="12" fill="#0667d4"/><rect x="336" y="108" width="12" height="12" fill="#0763cf"/><rect x="348" y="108" width="12" height="12" fill="#085dc9"/><rect x="360" y="108" width="12" height="12" fill="#0855c3"/><rect x="372" y="108" width="12" height="12" fill="#0a4fc0"/><rect x="384" y="108" width="12" height="12" fill="#0c4abf"/><rect x="396" y="108" width="12" height="12" fill="#0e46c0"/><rect x="408" y="108" width="12" height="12" fill="#1143c0"/><rect x="-12" y="120" width="12" height="12" fill="#005ecc"/><rect x="0" y="120" width="12" height="12" fill="#005ecd"/><rect x="12" y="120" width="12" height="12" fill="#005fce"/><rect x="24" y="120" width="12" height="12" fill="#005fcf"/><rect x="36" y="120" width="12" height="12" fill="#0060cf"/><rect x="48" y="120" width="12" height="12" fill="#0062cf"/><rect x="60" y="120" width="12" height="12" fill="#0064ce"/><rect x="72" y="120" width="12" height="12" fill="#0064cd"/><rect x="84" y="120" width="12" height="12" fill="#0063cc"/><rect x="96" y="120" width="12" height="12" fill="#0062cc"/><rect x="108" y="120" width="12" height="12" fill="#0060cc"/><rect x="120" y="120" width="12" height="12" fill="#005fcc"/><rect x="132" y="120" width="12" height="12" fill="#005ecd"/><rect x="144" y="120" width="12" height="12" fill="#005dcd"/><rect x="156" y="120" width="12" height="12" fill="#015ece"/><rect x="168" y="120" width="12" height="12" fill="#035fd0"/><rect x="180" y="120" width="12" height="12" fill="#0460d1"/><rect x="192" y="120" width="12" height="12" fill="#0660d1"/><rect x="204" y="120" width="12" height="12" fill="#095dcc"/><rect x="216" y="120" width="12" height="12" fill="#0b58c6"/><rect x="228" y="120" width="12" height="12" fill="#0d53bf"/><rect x="240" y="120" width="12" height="12" fill="#0f50bc"/><rect x="252" y="120" width="12" height="12" fill="#0f50bb"/><rect x="264" y="120" width="12" height="12" fill="#0e52bf"/><rect x="276" y="120" width="12" height="12" fill="#0d57c4"/><rect x="288" y="120" width="12" height="12" fill="#0b5dcb"/><rect x="300" y="120" width="12" height="12" fill="#0a63d2"/><rect x="312" y="120" width="12" height="12" fill="#0967d7"/><rect x="324" y="120" width="12" height="12" fill="#0966d6"/><rect x="336" y="120" width="12" height="12" fill="#0a61cf"/><rect x="348" y="120" width="12" height="12" fill="#0c59c8"/><rect x="360" y="120" width="12" height="12" fill="#0e50c0"/><rect x="372" y="120" width="12" height="12" fill="#1049bc"/><rect x="384" y="120" width="12" height="12" fill="#1344bb"/><rect x="396" y="120" width="12" height="12" fill="#1541bb"/><rect x="408" y="120" width="12" height="12" fill="#163ebc"/><rect x="-12" y="132" width="12" height="12" fill="#005dcb"/><rect x="0" y="132" width="12" height="12" fill="#005dcc"/><rect x="12" y="132" width="12" height="12" fill="#005dcc"/><rect x="24" y="132" width="12" height="12" fill="#005ecd"/><rect x="36" y="132" width="12" height="12" fill="#005fcd"/><rect x="48" y="132" width="12" height="12" fill="#0060cc"/><rect x="60" y="132" width="12" height="12" fill="#0061cb"/><rect x="72" y="132" width="12" height="12" fill="#0061ca"/><rect x="84" y="132" width="12" height="12" fill="#0060c9"/><rect x="96" y="132" width="12" height="12" fill="#005fc9"/><rect x="108" y="132" width="12" height="12" fill="#005dc9"/><rect x="120" y="132" width="12" height="12" fill="#005cc9"/><rect x="132" y="132" width="12" height="12" fill="#005bc9"/><rect x="144" y="132" width="12" height="12" fill="#015aca"/><rect x="156" y="132" width="12" height="12" fill="#035bcb"/><rect x="168" y="132" width="12" height="12" fill="#045ccc"/><rect x="180" y="132" width="12" height="12" fill="#065dcd"/><rect x="192" y="132" width="12" height="12" fill="#085dcd"/><rect x="204" y="132" width="12" height="12" fill="#0b5ac9"/><rect x="216" y="132" width="12" height="12" fill="#0d56c3"/><rect x="228" y="132" width="12" height="12" fill="#1051bd"/><rect x="240" y="132" width="12" height="12" fill="#124eba"/><rect x="252" y="132" width="12" height="12" fill="#134db9"/><rect x="264" y="132" width="12" height="12" fill="#1250bd"/><rect x="276" y="132" width="12" height="12" fill="#1154c2"/><rect x="288" y="132" width="12" height="12" fill="#105ac9"/><rect x="300" y="132" width="12" height="12" fill="#0f5fcf"/><rect x="312" y="132" width="12" height="12" fill="#0e62d3"/><rect x="324" y="132" width="12" height="12" fill="#0e61d2"/><rect x="336" y="132" width="12" height="12" fill="#105bcc"/><rect x="348" y="132" width="12" height="12" fill="#1253c5"/><rect x="360" y="132" width="12" height="12" fill="#154bbe"/><rect x="372" y="132" width="12" height="12" fill="#1844b9"/><rect x="384" y="132" width="12" height="12" fill="#1b3fb7"/><rect x="396" y="132" width="12" height="12" fill="#1c3bb7"/><rect x="408" y="132" width="12" height="12" fill="#1d39b7"/><rect x="-12" y="144" width="12" height="12" fill="#005cc9"/><rect x="0" y="144" width="12" height="12" fill="#005cca"/><rect x="12" y="144" width="12" height="12" fill="#005cca"/><rect x="24" y="144" width="12" height="12" fill="#005dca"/><rect x="36" y="144" width="12" height="12" fill="#005ec9"/><rect x="48" y="144" width="12" height="12" fill="#005fc8"/><rect x="60" y="144" width="12" height="12" fill="#005fc7"/><rect x="72" y="144" width="12" height="12" fill="#005ec6"/><rect x="84" y="144" width="12" height="12" fill="#005dc6"/><rect x="96" y="144" width="12" height="12" fill="#015bc5"/><rect x="108" y="144" width="12" height="12" fill="#015ac5"/><rect x="120" y="144" width="12" height="12" fill="#0258c5"/><rect x="132" y="144" width="12" height="12" fill="#0257c5"/><rect x="144" y="144" width="12" height="12" fill="#0357c5"/><rect x="156" y="144" width="12" height="12" fill="#0557c6"/><rect x="168" y="144" width="12" height="12" fill="#0658c7"/><rect x="180" y="144" width="12" height="12" fill="#0858c8"/><rect x="192" y="144" width="12" height="12" fill="#0a58c7"/><rect x="204" y="144" width="12" height="12" fill="#0c56c4"/><rect x="216" y="144" width="12" height="12" fill="#0f52bf"/><rect x="228" y="144" width="12" height="12" fill="#134dba"/><rect x="240" y="144" width="12" height="12" fill="#154ab6"/><rect x="252" y="144" width="12" height="12" fill="#174ab6"/><rect x="264" y="144" width="12" height="12" fill="#174cb9"/><rect x="276" y="144" width="12" height="12" fill="#164fbe"/><rect x="288" y="144" width="12" height="12" fill="#1554c4"/><rect x="300" y="144" width="12" height="12" fill="#1458c9"/><rect x="312" y="144" width="12" height="12" fill="#145acc"/><rect x="324" y="144" width="12" height="12" fill="#1459cb"/><rect x="336" y="144" width="12" height="12" fill="#1654c7"/><rect x="348" y="144" width="12" height="12" fill="#194dc1"/><rect x="360" y="144" width="12" height="12" fill="#1d45bb"/><rect x="372" y="144" width="12" height="12" fill="#213eb6"/><rect x="384" y="144" width="12" height="12" fill="#2339b4"/><rect x="396" y="144" width="12" height="12" fill="#2436b3"/><rect x="408" y="144" width="12" height="12" fill="#2335b4"/><rect x="-12" y="156" width="12" height="12" fill="#005bc7"/><rect x="0" y="156" width="12" height="12" fill="#005bc7"/><rect x="12" y="156" width="12" height="12" fill="#005bc7"/><rect x="24" y="156" width="12" height="12" fill="#005cc7"/><rect x="36" y="156" width="12" height="12" fill="#005cc6"/><rect x="48" y="156" width="12" height="12" fill="#015cc5"/><rect x="60" y="156" width="12" height="12" fill="#025cc4"/><rect x="72" y="156" width="12" height="12" fill="#025bc3"/><rect x="84" y="156" width="12" height="12" fill="#0359c2"/><rect x="96" y="156" width="12" height="12" fill="#0358c2"/><rect x="108" y="156" width="12" height="12" fill="#0456c1"/><rect x="120" y="156" width="12" height="12" fill="#0455c1"/><rect x="132" y="156" width="12" height="12" fill="#0554c1"/><rect x="144" y="156" width="12" height="12" fill="#0553c1"/><rect x="156" y="156" width="12" height="12" fill="#0653c1"/><rect x="168" y="156" width="12" height="12" fill="#0753c1"/><rect x="180" y="156" width="12" height="12" fill="#0954c2"/><rect x="192" y="156" width="12" height="12" fill="#0a54c2"/><rect x="204" y="156" width="12" height="12" fill="#0d52bf"/><rect x="216" y="156" width="12" height="12" fill="#114ebb"/><rect x="228" y="156" width="12" height="12" fill="#154ab6"/><rect x="240" y="156" width="12" height="12" fill="#1846b2"/><rect x="252" y="156" width="12" height="12" fill="#1a45b1"/><rect x="264" y="156" width="12" height="12" fill="#1b46b4"/><rect x="276" y="156" width="12" height="12" fill="#1b4ab8"/><rect x="288" y="156" width="12" height="12" fill="#1a4dbd"/><rect x="300" y="156" width="12" height="12" fill="#1a50c1"/><rect x="312" y="156" width="12" height="12" fill="#1952c4"/><rect x="324" y="156" width="12" height="12" fill="#1a50c3"/><rect x="336" y="156" width="12" height="12" fill="#1c4dc0"/><rect x="348" y="156" width="12" height="12" fill="#1f47bc"/><rect x="360" y="156" width="12" height="12" fill="#2340b7"/><rect x="372" y="156" width="12" height="12" fill="#2739b3"/><rect x="384" y="156" width="12" height="12" fill="#2a34b0"/><rect x="396" y="156" width="12" height="12" fill="#2933b0"/><rect x="408" y="156" width="12" height="12" fill="#2733b1"/><rect x="-12" y="168" width="12" height="12" fill="#005ac4"/><rect x="0" y="168" width="12" height="12" fill="#005ac4"/><rect x="12" y="168" width="12" height="12" fill="#005ac4"/><rect x="24" y="168" width="12" height="12" fill="#005ac4"/><rect x="36" y="168" width="12" height="12" fill="#0259c2"/><rect x="48" y="168" width="12" height="12" fill="#0359c1"/><rect x="60" y="168" width="12" height="12" fill="#0558c0"/><rect x="72" y="168" width="12" height="12" fill="#0557bf"/><rect x="84" y="168" width="12" height="12" fill="#0655bf"/><rect x="96" y="168" width="12" height="12" fill="#0654be"/><rect x="108" y="168" width="12" height="12" fill="#0752be"/><rect x="120" y="168" width="12" height="12" fill="#0751be"/><rect x="132" y="168" width="12" height="12" fill="#0750bd"/><rect x="144" y="168" width="12" height="12" fill="#0750bd"/><rect x="156" y="168" width="12" height="12" fill="#084fbd"/><rect x="168" y="168" width="12" height="12" fill="#0850be"/><rect x="180" y="168" width="12" height="12" fill="#0951bf"/><rect x="192" y="168" width="12" height="12" fill="#0b51be"/><rect x="204" y="168" width="12" height="12" fill="#0d4fbc"/><rect x="216" y="168" width="12" height="12" fill="#114cb8"/><rect x="228" y="168" width="12" height="12" fill="#1547b3"/><rect x="240" y="168" width="12" height="12" fill="#1a42af"/><rect x="252" y="168" width="12" height="12" fill="#1d41ae"/><rect x="264" y="168" width="12" height="12" fill="#1e41af"/><rect x="276" y="168" width="12" height="12" fill="#1f43b2"/><rect x="288" y="168" width="12" height="12" fill="#1f46b6"/><rect x="300" y="168" width="12" height="12" fill="#1e48b9"/><rect x="312" y="168" width="12" height="12" fill="#1e49bb"/><rect x="324" y="168" width="12" height="12" fill="#1f48bb"/><rect x="336" y="168" width="12" height="12" fill="#2046ba"/><rect x="348" y="168" width="12" height="12" fill="#2341b7"/><rect x="360" y="168" width="12" height="12" fill="#263cb4"/><rect x="372" y="168" width="12" height="12" fill="#2a37b1"/><rect x="384" y="168" width="12" height="12" fill="#2c33af"/><rect x="396" y="168" width="12" height="12" fill="#2a32af"/><rect x="408" y="168" width="12" height="12" fill="#2832b0"/><rect x="-12" y="180" width="12" height="12" fill="#0058c1"/><rect x="0" y="180" width="12" height="12" fill="#0058c1"/><rect x="12" y="180" width="12" height="12" fill="#0058c1"/><rect x="24" y="180" width="12" height="12" fill="#0357c0"/><rect x="36" y="180" width="12" height="12" fill="#0556bf"/><rect x="48" y="180" width="12" height="12" fill="#0754be"/><rect x="60" y="180" width="12" height="12" fill="#0853bc"/><rect x="72" y="180" width="12" height="12" fill="#0952bb"/><rect x="84" y="180" width="12" height="12" fill="#0a50bb"/><rect x="96" y="180" width="12" height="12" fill="#0a4fba"/><rect x="108" y="180" width="12" height="12" fill="#0a4eba"/><rect x="120" y="180" width="12" height="12" fill="#0a4dba"/><rect x="132" y="180" width="12" height="12" fill="#094dba"/><rect x="144" y="180" width="12" height="12" fill="#094dbb"/><rect x="156" y="180" width="12" height="12" fill="#094dbb"/><rect x="168" y="180" width="12" height="12" fill="#094ebc"/><rect x="180" y="180" width="12" height="12" fill="#094fbd"/><rect x="192" y="180" width="12" height="12" fill="#0a4fbd"/><rect x="204" y="180" width="12" height="12" fill="#0c4ebb"/><rect x="216" y="180" width="12" height="12" fill="#104ab7"/><rect x="228" y="180" width="12" height="12" fill="#1545b2"/><rect x="240" y="180" width="12" height="12" fill="#1a40ad"/><rect x="252" y="180" width="12" height="12" fill="#1f3dab"/><rect x="264" y="180" width="12" height="12" fill="#213cab"/><rect x="276" y="180" width="12" height="12" fill="#233dac"/><rect x="288" y="180" width="12" height="12" fill="#233eaf"/><rect x="300" y="180" width="12" height="12" fill="#2240b1"/><rect x="312" y="180" width="12" height="12" fill="#2241b3"/><rect x="324" y="180" width="12" height="12" fill="#2241b3"/><rect x="336" y="180" width="12" height="12" fill="#233fb3"/><rect x="348" y="180" width="12" height="12" fill="#243db2"/><rect x="360" y="180" width="12" height="12" fill="#263ab0"/><rect x="372" y="180" width="12" height="12" fill="#2837af"/><rect x="384" y="180" width="12" height="12" fill="#2935ae"/><rect x="396" y="180" width="12" height="12" fill="#2834ae"/><rect x="408" y="180" width="12" height="12" fill="#2634af"/><rect x="-12" y="192" width="12" height="12" fill="#0056be"/><rect x="0" y="192" width="12" height="12" fill="#0156be"/><rect x="12" y="192" width="12" height="12" fill="#0355bd"/><rect x="24" y="192" width="12" height="12" fill="#0653bc"/><rect x="36" y="192" width="12" height="12" fill="#0951bb"/><rect x="48" y="192" width="12" height="12" fill="#0b4fb9"/><rect x="60" y="192" width="12" height="12" fill="#0d4db8"/><rect x="72" y="192" width="12" height="12" fill="#0e4cb7"/><rect x="84" y="192" width="12" height="12" fill="#0e4bb7"/><rect x="96" y="192" width="12" height="12" fill="#0e4ab6"/><rect x="108" y="192" width="12" height="12" fill="#0d4ab7"/><rect x="120" y="192" width="12" height="12" fill="#0d49b7"/><rect x="132" y="192" width="12" height="12" fill="#0c4ab7"/><rect x="144" y="192" width="12" height="12" fill="#0b4ab8"/><rect x="156" y="192" width="12" height="12" fill="#0b4bb9"/><rect x="168" y="192" width="12" height="12" fill="#0a4cba"/><rect x="180" y="192" width="12" height="12" fill="#0a4ebb"/><rect x="192" y="192" width="12" height="12" fill="#0a4ebc"/><rect x="204" y="192" width="12" height="12" fill="#0b4dbb"/><rect x="216" y="192" width="12" height="12" fill="#0e4ab7"/><rect x="228" y="192" width="12" height="12" fill="#1445b2"/><rect x="240" y="192" width="12" height="12" fill="#1b3fac"/><rect x="252" y="192" width="12" height="12" fill="#213aa8"/><rect x="264" y="192" width="12" height="12" fill="#2437a6"/><rect x="276" y="192" width="12" height="12" fill="#2637a7"/><rect x="288" y="192" width="12" height="12" fill="#2538a8"/><rect x="300" y="192" width="12" height="12" fill="#2539a9"/><rect x="312" y="192" width="12" height="12" fill="#243aab"/><rect x="324" y="192" width="12" height="12" fill="#233aac"/><rect x="336" y="192" width="12" height="12" fill="#233aac"/><rect x="348" y="192" width="12" height="12" fill="#2439ac"/><rect x="360" y="192" width="12" height="12" fill="#2438ac"/><rect x="372" y="192" width="12" height="12" fill="#2537ad"/><rect x="384" y="192" width="12" height="12" fill="#2437ad"/><rect x="396" y="192" width="12" height="12" fill="#2336ae"/><rect x="408" y="192" width="12" height="12" fill="#2236ae"/><rect x="-12" y="204" width="12" height="12" fill="#0353ba"/><rect x="0" y="204" width="12" height="12" fill="#0452ba"/><rect x="12" y="204" width="12" height="12" fill="#0751b9"/><rect x="24" y="204" width="12" height="12" fill="#0a4eb8"/><rect x="36" y="204" width="12" height="12" fill="#0e4cb6"/><rect x="48" y="204" width="12" height="12" fill="#1049b5"/><rect x="60" y="204" width="12" height="12" fill="#1247b4"/><rect x="72" y="204" width="12" height="12" fill="#1346b3"/><rect x="84" y="204" width="12" height="12" fill="#1345b2"/><rect x="96" y="204" width="12" height="12" fill="#1245b2"/><rect x="108" y="204" width="12" height="12" fill="#1145b3"/><rect x="120" y="204" width="12" height="12" fill="#1045b3"/><rect x="132" y="204" width="12" height="12" fill="#0f46b4"/><rect x="144" y="204" width="12" height="12" fill="#0e47b6"/><rect x="156" y="204" width="12" height="12" fill="#0d49b7"/><rect x="168" y="204" width="12" height="12" fill="#0c4ab9"/><rect x="180" y="204" width="12" height="12" fill="#0b4cba"/><rect x="192" y="204" width="12" height="12" fill="#0a4dbb"/><rect x="204" y="204" width="12" height="12" fill="#0a4dbb"/><rect x="216" y="204" width="12" height="12" fill="#0d4ab8"/><rect x="228" y="204" width="12" height="12" fill="#1444b2"/><rect x="240" y="204" width="12" height="12" fill="#1c3cab"/><rect x="252" y="204" width="12" height="12" fill="#2336a5"/><rect x="264" y="204" width="12" height="12" fill="#2732a2"/><rect x="276" y="204" width="12" height="12" fill="#2831a1"/><rect x="288" y="204" width="12" height="12" fill="#2731a1"/><rect x="300" y="204" width="12" height="12" fill="#2632a2"/><rect x="312" y="204" width="12" height="12" fill="#2533a3"/><rect x="324" y="204" width="12" height="12" fill="#2334a4"/><rect x="336" y="204" width="12" height="12" fill="#2234a5"/><rect x="348" y="204" width="12" height="12" fill="#2235a6"/><rect x="360" y="204" width="12" height="12" fill="#2136a8"/><rect x="372" y="204" width="12" height="12" fill="#2037a9"/><rect x="384" y="204" width="12" height="12" fill="#1f38ab"/><rect x="396" y="204" width="12" height="12" fill="#1e38ac"/><rect x="408" y="204" width="12" height="12" fill="#1d37ac"/><rect x="-12" y="216" width="12" height="12" fill="#084eb6"/><rect x="0" y="216" width="12" height="12" fill="#094eb5"/><rect x="12" y="216" width="12" height="12" fill="#0c4cb4"/><rect x="24" y="216" width="12" height="12" fill="#1049b3"/><rect x="36" y="216" width="12" height="12" fill="#1345b1"/><rect x="48" y="216" width="12" height="12" fill="#1643b0"/><rect x="60" y="216" width="12" height="12" fill="#1841af"/><rect x="72" y="216" width="12" height="12" fill="#183fae"/><rect x="84" y="216" width="12" height="12" fill="#173fae"/><rect x="96" y="216" width="12" height="12" fill="#163fae"/><rect x="108" y="216" width="12" height="12" fill="#1440ae"/><rect x="120" y="216" width="12" height="12" fill="#1341af"/><rect x="132" y="216" width="12" height="12" fill="#1142b1"/><rect x="144" y="216" width="12" height="12" fill="#1044b3"/><rect x="156" y="216" width="12" height="12" fill="#0f45b4"/><rect x="168" y="216" width="12" height="12" fill="#0e47b6"/><rect x="180" y="216" width="12" height="12" fill="#0d49b8"/><rect x="192" y="216" width="12" height="12" fill="#0d4ab9"/><rect x="204" y="216" width="12" height="12" fill="#0d4bb9"/><rect x="216" y="216" width="12" height="12" fill="#0f48b7"/><rect x="228" y="216" width="12" height="12" fill="#1642b0"/><rect x="240" y="216" width="12" height="12" fill="#1f39a8"/><rect x="252" y="216" width="12" height="12" fill="#2632a2"/><rect x="264" y="216" width="12" height="12" fill="#292e9e"/><rect x="276" y="216" width="12" height="12" fill="#292c9c"/><rect x="288" y="216" width="12" height="12" fill="#282c9b"/><rect x="300" y="216" width="12" height="12" fill="#262c9b"/><rect x="312" y="216" width="12" height="12" fill="#242d9c"/><rect x="324" y="216" width="12" height="12" fill="#222d9c"/><rect x="336" y="216" width="12" height="12" fill="#212f9e"/><rect x="348" y="216" width="12" height="12" fill="#1f309f"/><rect x="360" y="216" width="12" height="12" fill="#1e32a2"/><rect x="372" y="216" width="12" height="12" fill="#1c35a4"/><rect x="384" y="216" width="12" height="12" fill="#1a37a7"/><rect x="396" y="216" width="12" height="12" fill="#1938a9"/><rect x="408" y="216" width="12" height="12" fill="#1936a9"/><rect x="-12" y="228" width="12" height="12" fill="#0e49b1"/><rect x="0" y="228" width="12" height="12" fill="#1048b0"/><rect x="12" y="228" width="12" height="12" fill="#1245af"/><rect x="24" y="228" width="12" height="12" fill="#1642ad"/><rect x="36" y="228" width="12" height="12" fill="#193fab"/><rect x="48" y="228" width="12" height="12" fill="#1c3baa"/><rect x="60" y="228" width="12" height="12" fill="#1d3aa9"/><rect x="72" y="228" width="12" height="12" fill="#1d39a8"/><rect x="84" y="228" width="12" height="12" fill="#1b39a8"/><rect x="96" y="228" width="12" height="12" fill="#193aa9"/><rect x="108" y="228" width="12" height="12" fill="#173baa"/><rect x="120" y="228" width="12" height="12" fill="#153cab"/><rect x="132" y="228" width="12" height="12" fill="#143ead"/><rect x="144" y="228" width="12" height="12" fill="#1240af"/><rect x="156" y="228" width="12" height="12" fill="#1142b1"/><rect x="168" y="228" width="12" height="12" fill="#1144b3"/><rect x="180" y="228" width="12" height="12" fill="#1145b5"/><rect x="192" y="228" width="12" height="12" fill="#1147b6"/><rect x="204" y="228" width="12" height="12" fill="#1146b6"/><rect x="216" y="228" width="12" height="12" fill="#1444b3"/><rect x="228" y="228" width="12" height="12" fill="#193ead"/><rect x="240" y="228" width="12" height="12" fill="#2137a6"/><rect x="252" y="228" width="12" height="12" fill="#272f9f"/><rect x="264" y="228" width="12" height="12" fill="#292b9a"/><rect x="276" y="228" width="12" height="12" fill="#292998"/><rect x="288" y="228" width="12" height="12" fill="#272896"/><rect x="300" y="228" width="12" height="12" fill="#252795"/><rect x="312" y="228" width="12" height="12" fill="#222794"/><rect x="324" y="228" width="12" height="12" fill="#202794"/><rect x="336" y="228" width="12" height="12" fill="#1e2895"/><rect x="348" y="228" width="12" height="12" fill="#1c2a97"/><rect x="360" y="228" width="12" height="12" fill="#1b2c9a"/><rect x="372" y="228" width="12" height="12" fill="#192f9d"/><rect x="384" y="228" width="12" height="12" fill="#1732a0"/><rect x="396" y="228" width="12" height="12" fill="#1634a2"/><rect x="408" y="228" width="12" height="12" fill="#1632a2"/><rect x="-12" y="240" width="12" height="12" fill="#1443ab"/><rect x="0" y="240" width="12" height="12" fill="#1641aa"/><rect x="12" y="240" width="12" height="12" fill="#193fa9"/><rect x="24" y="240" width="12" height="12" fill="#1b3ba7"/><rect x="36" y="240" width="12" height="12" fill="#1e38a5"/><rect x="48" y="240" width="12" height="12" fill="#2134a4"/><rect x="60" y="240" width="12" height="12" fill="#2233a3"/><rect x="72" y="240" width="12" height="12" fill="#2032a3"/><rect x="84" y="240" width="12" height="12" fill="#1e33a3"/><rect x="96" y="240" width="12" height="12" fill="#1c34a4"/><rect x="108" y="240" width="12" height="12" fill="#1a36a5"/><rect x="120" y="240" width="12" height="12" fill="#1737a6"/><rect x="132" y="240" width="12" height="12" fill="#1639a8"/><rect x="144" y="240" width="12" height="12" fill="#143caa"/><rect x="156" y="240" width="12" height="12" fill="#143ead"/><rect x="168" y="240" width="12" height="12" fill="#143faf"/><rect x="180" y="240" width="12" height="12" fill="#1441b1"/><rect x="192" y="240" width="12" height="12" fill="#1642b2"/><rect x="204" y="240" width="12" height="12" fill="#1741b1"/><rect x="216" y="240" width="12" height="12" fill="#193fae"/><rect x="228" y="240" width="12" height="12" fill="#1d3ba9"/><rect x="240" y="240" width="12" height="12" fill="#2235a3"/><rect x="252" y="240" width="12" height="12" fill="#262f9d"/><rect x="264" y="240" width="12" height="12" fill="#282a98"/><rect x="276" y="240" width="12" height="12" fill="#272794"/><rect x="288" y="240" width="12" height="12" fill="#252491"/><rect x="300" y="240" width="12" height="12" fill="#22228e"/><rect x="312" y="240" width="12" height="12" fill="#20218c"/><rect x="324" y="240" width="12" height="12" fill="#1d218c"/><rect x="336" y="240" width="12" height="12" fill="#1b218c"/><rect x="348" y="240" width="12" height="12" fill="#19238e"/><rect x="360" y="240" width="12" height="12" fill="#182591"/><rect x="372" y="240" width="12" height="12" fill="#172894"/><rect x="384" y="240" width="12" height="12" fill="#162a97"/><rect x="396" y="240" width="12" height="12" fill="#152b99"/><rect x="408" y="240" width="12" height="12" fill="#152b99"/><rect x="-12" y="252" width="12" height="12" fill="#193da5"/><rect x="0" y="252" width="12" height="12" fill="#1c3ba4"/><rect x="12" y="252" width="12" height="12" fill="#1e38a2"/><rect x="24" y="252" width="12" height="12" fill="#2035a0"/><rect x="36" y="252" width="12" height="12" fill="#22319f"/><rect x="48" y="252" width="12" height="12" fill="#232e9d"/><rect x="60" y="252" width="12" height="12" fill="#242d9c"/><rect x="72" y="252" width="12" height="12" fill="#222d9c"/><rect x="84" y="252" width="12" height="12" fill="#202e9d"/><rect x="96" y="252" width="12" height="12" fill="#1d2f9e"/><rect x="108" y="252" width="12" height="12" fill="#1b319f"/><rect x="120" y="252" width="12" height="12" fill="#1933a1"/><rect x="132" y="252" width="12" height="12" fill="#1735a3"/><rect x="144" y="252" width="12" height="12" fill="#1637a5"/><rect x="156" y="252" width="12" height="12" fill="#1639a7"/><rect x="168" y="252" width="12" height="12" fill="#163baa"/><rect x="180" y="252" width="12" height="12" fill="#173cab"/><rect x="192" y="252" width="12" height="12" fill="#193dac"/><rect x="204" y="252" width="12" height="12" fill="#1a3cab"/><rect x="216" y="252" width="12" height="12" fill="#1c3aa9"/><rect x="228" y="252" width="12" height="12" fill="#1f37a5"/><rect x="240" y="252" width="12" height="12" fill="#2233a0"/><rect x="252" y="252" width="12" height="12" fill="#252e9b"/><rect x="264" y="252" width="12" height="12" fill="#262a96"/><rect x="276" y="252" width="12" height="12" fill="#252590"/><rect x="288" y="252" width="12" height="12" fill="#22218c"/><rect x="300" y="252" width="12" height="12" fill="#1f1e88"/><rect x="312" y="252" width="12" height="12" fill="#1c1b85"/><rect x="324" y="252" width="12" height="12" fill="#191a83"/><rect x="336" y="252" width="12" height="12" fill="#181a83"/><rect x="348" y="252" width="12" height="12" fill="#171b84"/><rect x="360" y="252" width="12" height="12" fill="#161c86"/><rect x="372" y="252" width="12" height="12" fill="#161e89"/><rect x="384" y="252" width="12" height="12" fill="#16208b"/><rect x="396" y="252" width="12" height="12" fill="#15218e"/><rect x="408" y="252" width="12" height="12" fill="#15218f"/><rect x="-12" y="264" width="12" height="12" fill="#1e389f"/><rect x="0" y="264" width="12" height="12" fill="#20359e"/><rect x="12" y="264" width="12" height="12" fill="#22339c"/><rect x="24" y="264" width="12" height="12" fill="#222f9a"/><rect x="36" y="264" width="12" height="12" fill="#222c98"/><rect x="48" y="264" width="12" height="12" fill="#232a96"/><rect x="60" y="264" width="12" height="12" fill="#232896"/><rect x="72" y="264" width="12" height="12" fill="#222896"/><rect x="84" y="264" width="12" height="12" fill="#202997"/><rect x="96" y="264" width="12" height="12" fill="#1e2a98"/><rect x="108" y="264" width="12" height="12" fill="#1c2c9a"/><rect x="120" y="264" width="12" height="12" fill="#1a2e9b"/><rect x="132" y="264" width="12" height="12" fill="#18309d"/><rect x="144" y="264" width="12" height="12" fill="#17329f"/><rect x="156" y="264" width="12" height="12" fill="#1734a2"/><rect x="168" y="264" width="12" height="12" fill="#1836a4"/><rect x="180" y="264" width="12" height="12" fill="#1937a5"/><rect x="192" y="264" width="12" height="12" fill="#1b38a6"/><rect x="204" y="264" width="12" height="12" fill="#1c37a5"/><rect x="216" y="264" width="12" height="12" fill="#1e36a3"/><rect x="228" y="264" width="12" height="12" fill="#2034a0"/><rect x="240" y="264" width="12" height="12" fill="#22319d"/><rect x="252" y="264" width="12" height="12" fill="#242d98"/><rect x="264" y="264" width="12" height="12" fill="#242993"/><rect x="276" y="264" width="12" height="12" fill="#22238c"/><rect x="288" y="264" width="12" height="12" fill="#1f1e86"/><rect x="300" y="264" width="12" height="12" fill="#1c1981"/><rect x="312" y="264" width="12" height="12" fill="#18157d"/><rect x="324" y="264" width="12" height="12" fill="#15137a"/><rect x="336" y="264" width="12" height="12" fill="#141279"/><rect x="348" y="264" width="12" height="12" fill="#14127a"/><rect x="360" y="264" width="12" height="12" fill="#14137c"/><rect x="372" y="264" width="12" height="12" fill="#15147e"/><rect x="384" y="264" width="12" height="12" fill="#161680"/><rect x="396" y="264" width="12" height="12" fill="#161783"/><rect x="408" y="264" width="12" height="12" fill="#151885"/><rect x="-12" y="276" width="12" height="12" fill="#213299"/><rect x="0" y="276" width="12" height="12" fill="#233097"/><rect x="12" y="276" width="12" height="12" fill="#242d95"/><rect x="24" y="276" width="12" height="12" fill="#232a93"/><rect x="36" y="276" width="12" height="12" fill="#212891"/><rect x="48" y="276" width="12" height="12" fill="#212690"/><rect x="60" y="276" width="12" height="12" fill="#21248f"/><rect x="72" y="276" width="12" height="12" fill="#202490"/><rect x="84" y="276" width="12" height="12" fill="#1f2591"/><rect x="96" y="276" width="12" height="12" fill="#1e2692"/><rect x="108" y="276" width="12" height="12" fill="#1c2894"/><rect x="120" y="276" width="12" height="12" fill="#1a2a96"/><rect x="132" y="276" width="12" height="12" fill="#192c97"/><rect x="144" y="276" width="12" height="12" fill="#182e99"/><rect x="156" y="276" width="12" height="12" fill="#182f9b"/><rect x="168" y="276" width="12" height="12" fill="#18319d"/><rect x="180" y="276" width="12" height="12" fill="#1a329f"/><rect x="192" y="276" width="12" height="12" fill="#1b339f"/><rect x="204" y="276" width="12" height="12" fill="#1d339f"/><rect x="216" y="276" width="12" height="12" fill="#1f329d"/><rect x="228" y="276" width="12" height="12" fill="#20309b"/><rect x="240" y="276" width="12" height="12" fill="#212e98"/><rect x="252" y="276" width="12" height="12" fill="#222b94"/><rect x="264" y="276" width="12" height="12" fill="#21268e"/><rect x="276" y="276" width="12" height="12" fill="#1f2088"/><rect x="288" y="276" width="12" height="12" fill="#1c1a81"/><rect x="300" y="276" width="12" height="12" fill="#18147a"/><rect x="312" y="276" width="12" height="12" fill="#140f75"/><rect x="324" y="276" width="12" height="12" fill="#120c71"/><rect x="336" y="276" width="12" height="12" fill="#110a70"/><rect x="348" y="276" width="12" height="12" fill="#110a70"/><rect x="360" y="276" width="12" height="12" fill="#130a72"/><rect x="372" y="276" width="12" height="12" fill="#140b73"/><rect x="384" y="276" width="12" height="12" fill="#150c75"/><rect x="396" y="276" width="12" height="12" fill="#150d78"/><rect x="408" y="276" width="12" height="12" fill="#150f7a"/><rect x="-12" y="288" width="12" height="12" fill="#232d92"/><rect x="0" y="288" width="12" height="12" fill="#242b91"/><rect x="12" y="288" width="12" height="12" fill="#24288f"/><rect x="24" y="288" width="12" height="12" fill="#22268d"/><rect x="36" y="288" width="12" height="12" fill="#20238a"/><rect x="48" y="288" width="12" height="12" fill="#1f2289"/><rect x="60" y="288" width="12" height="12" fill="#1f2189"/><rect x="72" y="288" width="12" height="12" fill="#1f208a"/><rect x="84" y="288" width="12" height="12" fill="#1e218b"/><rect x="96" y="288" width="12" height="12" fill="#1d228c"/><rect x="108" y="288" width="12" height="12" fill="#1c238e"/><rect x="120" y="288" width="12" height="12" fill="#1a258f"/><rect x="132" y="288" width="12" height="12" fill="#192791"/><rect x="144" y="288" width="12" height="12" fill="#192993"/><rect x="156" y="288" width="12" height="12" fill="#182a95"/><rect x="168" y="288" width="12" height="12" fill="#192c96"/><rect x="180" y="288" width="12" height="12" fill="#1a2d98"/><rect x="192" y="288" width="12" height="12" fill="#1c2d98"/><rect x="204" y="288" width="12" height="12" fill="#1d2d98"/><rect x="216" y="288" width="12" height="12" fill="#1e2d97"/><rect x="228" y="288" width="12" height="12" fill="#1f2b94"/><rect x="240" y="288" width="12" height="12" fill="#202991"/><rect x="252" y="288" width="12" height="12" fill="#20268d"/><rect x="264" y="288" width="12" height="12" fill="#1f2288"/><rect x="276" y="288" width="12" height="12" fill="#1c1c82"/><rect x="288" y="288" width="12" height="12" fill="#19167a"/><rect x="300" y="288" width="12" height="12" fill="#150f73"/><rect x="312" y="288" width="12" height="12" fill="#110a6e"/><rect x="324" y="288" width="12" height="12" fill="#0f0669"/><rect x="336" y="288" width="12" height="12" fill="#0e0468"/><rect x="348" y="288" width="12" height="12" fill="#0f0368"/><rect x="360" y="288" width="12" height="12" fill="#110369"/><rect x="372" y="288" width="12" height="12" fill="#12036a"/><rect x="384" y="288" width="12" height="12" fill="#14046c"/><rect x="396" y="288" width="12" height="12" fill="#14056f"/><rect x="408" y="288" width="12" height="12" fill="#140671"/><rect x="-12" y="300" width="12" height="12" fill="#23288c"/><rect x="0" y="300" width="12" height="12" fill="#24268a"/><rect x="12" y="300" width="12" height="12" fill="#232489"/><rect x="24" y="300" width="12" height="12" fill="#222187"/><rect x="36" y="300" width="12" height="12" fill="#202085"/><rect x="48" y="300" width="12" height="12" fill="#1f1e84"/><rect x="60" y="300" width="12" height="12" fill="#1e1d84"/><rect x="72" y="300" width="12" height="12" fill="#1e1d84"/><rect x="84" y="300" width="12" height="12" fill="#1d1d85"/><rect x="96" y="300" width="12" height="12" fill="#1d1e86"/><rect x="108" y="300" width="12" height="12" fill="#1c1f88"/><rect x="120" y="300" width="12" height="12" fill="#1b2189"/><rect x="132" y="300" width="12" height="12" fill="#1a228b"/><rect x="144" y="300" width="12" height="12" fill="#19248d"/><rect x="156" y="300" width="12" height="12" fill="#19258e"/><rect x="168" y="300" width="12" height="12" fill="#1a2790"/><rect x="180" y="300" width="12" height="12" fill="#1a2890"/><rect x="192" y="300" width="12" height="12" fill="#1b2891"/><rect x="204" y="300" width="12" height="12" fill="#1c2890"/><rect x="216" y="300" width="12" height="12" fill="#1d278f"/><rect x="228" y="300" width="12" height="12" fill="#1e268d"/><rect x="240" y="300" width="12" height="12" fill="#1e248a"/><rect x="252" y="300" width="12" height="12" fill="#1d2186"/><rect x="264" y="300" width="12" height="12" fill="#1c1c81"/><rect x="276" y="300" width="12" height="12" fill="#1a177b"/><rect x="288" y="300" width="12" height="12" fill="#161174"/><rect x="300" y="300" width="12" height="12" fill="#130b6d"/><rect x="312" y="300" width="12" height="12" fill="#100568"/><rect x="324" y="300" width="12" height="12" fill="#0e0163"/><rect x="336" y="300" width="12" height="12" fill="#0d0061"/><rect x="348" y="300" width="12" height="12" fill="#0e0061"/><rect x="360" y="300" width="12" height="12" fill="#0f0061"/><rect x="372" y="300" width="12" height="12" fill="#110062"/><rect x="384" y="300" width="12" height="12" fill="#120064"/><rect x="396" y="300" width="12" height="12" fill="#130066"/><rect x="408" y="300" width="12" height="12" fill="#130068"/></svg>
  <!-- 2 box -->
  <div class="a" style="left:41px;top:51px;width:8px;height:8px;background:#fff;font-size:7px;font-weight:bold;line-height:8px;text-align:center;color:#000">2</div>
  <div class="a" style="left:157px;top:52px;font-weight:bold;font-size:27px;letter-spacing:-1px;color:#f4f8ff;text-shadow:1px 1px 1px rgba(0,10,60,0.45);white-space:nowrap;line-height:30px">Menu 1</div>
  <!-- video2 -->
  <div class="a" style="left:94px;top:85px;width:89px;height:66px;background:#000"></div>
  <div class="a" style="left:114px;top:85px;width:49px;height:66px;background:#fff"></div>
  <svg class="a" style="left:114px;top:85px" width="49" height="66">
    <path d="M4 4h22" stroke="#b0b0b0" stroke-width="0.5"/>
    <g stroke="#9a9a9a" stroke-width="1" stroke-dasharray="3 1 2 1 4 1">
      <path d="M4 9.5h40M4 11.5h38M4 13.5h40M4 15.5h24"/>
    </g>
    <rect x="6" y="22" width="5" height="4" fill="#98c838"/><rect x="16" y="22" width="5" height="4" fill="#e08040"/><rect x="24" y="22" width="5" height="4" fill="#e08040"/><rect x="33" y="22" width="5" height="4" fill="#98c838"/><rect x="38" y="23" width="3" height="3" fill="#c03010"/>
    <path d="M6 28.5h32" stroke="#404890" stroke-width="1"/>
    <g stroke="#a4a4a4" stroke-width="1" stroke-dasharray="3 1 2 1 4 1 2 1">
      <path d="M4 31.5h41M4 33.5h41M4 35.5h41M4 37.5h35M4 41.5h41M4 43.5h41M4 45.5h41M4 47.5h30M4 51.5h41M4 53.5h41M4 55.5h38M4 59.5h41M4 61.5h35"/>
    </g>
  </svg>
  <div class="a" style="left:95px;top:85px;width:8px;height:8px;background:#fff;font-size:7px;font-weight:bold;line-height:8px;text-align:center;color:#000">4</div>
  <div class="a vt" style="left:119px;top:157px">video2</div>
  <!-- video1 -->
  <div class="a" style="left:58px;top:178px;width:89px;height:65px;background:#000"></div>
  <svg class="a" style="left:58px;top:184px" width="89" height="55" style="filter:blur(0.4px)">
    <rect width="89" height="55" fill="#e4e4e2"/>
    <path d="M0 0h30l8 6 4 10 4 8 5 4v27H0z" fill="#6a6a68"/>
    <path d="M0 0h22l4 4v38L0 48z" fill="#5a5a58"/>
    <path d="M2 14l24 2v26L2 46z" fill="#7c7c7a"/>
    <path d="M5 18h5v22h-5zM13 19h4v19h-4zM19 20h3v18h-3z" fill="#3c3c3a"/>
    <path d="M30 14h6v24h-6z" fill="#8a8a88"/><path d="M38 20h4v16h-4z" fill="#666664"/>
    <path d="M26 2v40" stroke="#4a4a48" stroke-width="0.8"/>
    <path d="M44 30h30v10H44z" fill="#8c8c8a"/>
    <path d="M70 24l4-6 6-2 3-8 6-2v48H70z" fill="#5a5a58"/>
    <path d="M78 20h11v28h-11z" fill="#484846"/>
    <path d="M0 44l26-6h50l13 6v11H0z" fill="#9c9c9a"/>
    <path d="M30 40h40l8 8 11 2v5H18z" fill="#b8b8b6"/>
    <path d="M0 47l24-5 4 4-28 6z" fill="#c0c0be"/>
    <path d="M24 34h4l1 8 0 10h-6z" fill="#2a2a28"/>
    <path d="M48 5h28" stroke="#707070" stroke-width="0.7" stroke-dasharray="3 1"/>
  </svg>
  <div class="a" style="left:58px;top:178px;width:8px;height:9px;background:#fff;font-size:8px;font-weight:bold;line-height:9px;text-align:center;color:#000;font-family:'Liberation Serif',serif">1</div>
  <div class="a vt" style="left:83px;top:249px">video1</div>
  <!-- aliceSprings -->
  <div class="a" style="left:290px;top:174px;width:93px;height:92px;background:#6666c4;border:2px solid #c8c8d8"></div>
  <svg class="a" style="left:292px;top:176px" width="89" height="67">
    <rect width="89" height="67" fill="#8a2c3c"/>
    <path d="M0 0h89v4L0 36z" fill="#4a4e4a"/>
    <g fill="none" stroke-linecap="round">
      <path d="M-2 38L91 4" stroke="#e0b850" stroke-width="4" stroke-dasharray="3 2"/>
      <path d="M-2 43L91 10" stroke="#d8e4ec" stroke-width="3.5" stroke-dasharray="4 1.5"/>
      <path d="M-2 51L91 18" stroke="#e8e8f0" stroke-width="3.5" stroke-dasharray="4 1.5"/>
      <path d="M-2 55L91 22" stroke="#c0a0c8" stroke-width="3" stroke-dasharray="3 2"/>
      <path d="M-2 62L91 29" stroke="#e4e0ec" stroke-width="3.5" stroke-dasharray="4 1.5"/>
      <path d="M-2 66L91 33" stroke="#c8a8c8" stroke-width="3" stroke-dasharray="3 2"/>
      <path d="M-2 74L91 41" stroke="#e8e4ee" stroke-width="4" stroke-dasharray="4 1.5"/>
      <path d="M20 72L91 50" stroke="#d8c8d8" stroke-width="3.5" stroke-dasharray="4 1.5"/>
      <path d="M45 61L75 52" stroke="#e0c040" stroke-width="2.5"/>
    </g>
    <rect x="68" y="3" width="8" height="19" fill="#e8c438"/>
    <rect x="0" y="58" width="89" height="9" fill="rgba(30,30,34,0.6)"/>
    
    <circle cx="5" cy="62.5" r="1" fill="#fff"/><path d="M13 62.5h15" stroke="#fff" stroke-width="1.5" stroke-dasharray="2 0.7"/>
  </svg>
  <div class="a" style="left:292px;top:176px;width:8px;height:9px;background:#fff;border:1px solid #606060;font-size:7px;line-height:8px;text-align:center;color:#000">3</div>
  <div class="a vt" style="left:300px;top:248px;font-size:13.4px;color:#e8ecff">aliceSprings</div>
</div>
<!-- context menu -->
<div class="a" style="left:87px;top:151px;width:156px;height:96px;background:rgba(40,40,50,0.45);filter:blur(0.8px)"></div>
<div class="a" style="left:85px;top:149px;width:156px;height:95px;background:#fff;border:1px solid #8a8a90"></div>
<div class="a" style="left:86px;top:150px;width:17px;height:93px;background:#d8d8dc"></div>
<div class="a" style="left:103px;top:211px;width:135px;height:1px;background:#a8a8ac"></div>
<div class="a cm" style="left:104px;top:154px;font-weight:bold;font-size:9px;letter-spacing:-0.2px"><u>N</u>avigate Into</div>
<div class="a cm" style="left:104px;top:168px"><u>R</u>ename</div>
<svg class="a" style="left:90px;top:181px" width="10" height="10"><path d="M1 1l8 8M9 1l-8 8" stroke="#c04060" stroke-width="1.6"/></svg>
<div class="a cm" style="left:104px;top:182px"><u>D</u>elete</div>
<div class="a cm" style="left:104px;top:196px">Set DVD <u>S</u>tart</div>
<svg class="a" style="left:89px;top:215px" width="12" height="12"><path d="M2.5 1.5h8M2.5 4h8M2.5 6.5h3" stroke="#606068" stroke-width="1"/><circle cx="0.8" cy="1.5" r="0.8" fill="#404048"/><circle cx="0.8" cy="4" r="0.8" fill="#404048"/><circle cx="7.5" cy="8.5" r="3.2" fill="#3a9a80"/><path d="M5.5 8.5h4M7.5 6.5v4" stroke="#e8fff8" stroke-width="0.9"/></svg>
<div class="a cm" style="left:104px;top:217px"><u>I</u>nsert Scene Selection Menu</div>
<div class="a cm" style="left:104px;top:231px;color:#a8a8ac">Set <u>T</u>humbnail from View</div>
</body></html>
